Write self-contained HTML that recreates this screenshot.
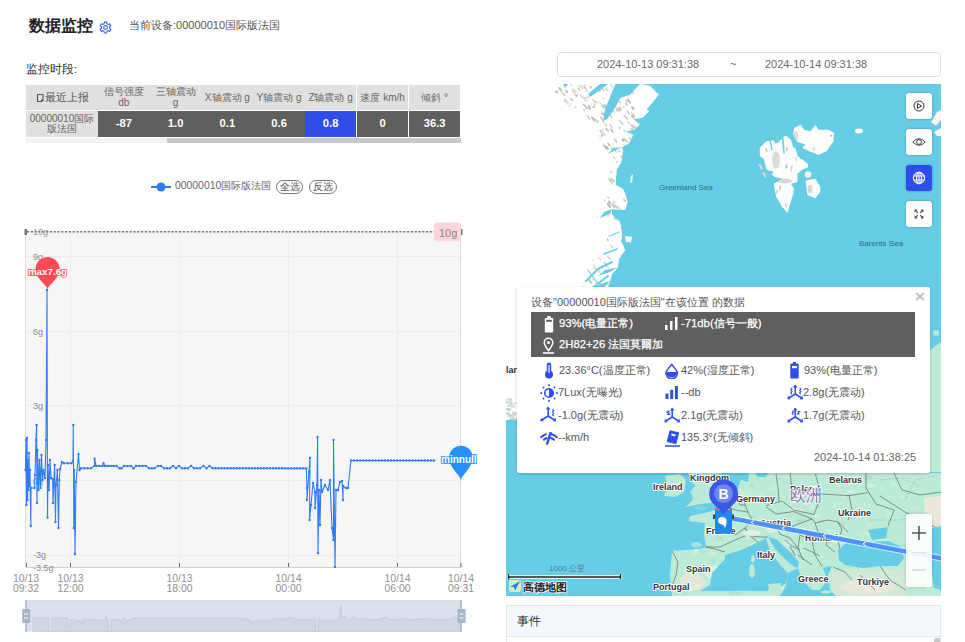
<!DOCTYPE html>
<html><head><meta charset="utf-8">
<style>
*{margin:0;padding:0;box-sizing:border-box}
html,body{width:965px;height:642px;overflow:hidden;background:#fff;font-family:"Liberation Sans",sans-serif;color:#333}
.abs{position:absolute}
.title{left:28.5px;top:15px;font-size:16px;font-weight:bold;color:#222;line-height:22px;white-space:nowrap}
.sub{left:129px;top:17px;font-size:11px;color:#555;line-height:16px;white-space:nowrap}
.period{left:26px;top:60.5px;font-size:11.5px;color:#333;line-height:16px}
table.t{position:absolute;left:26px;top:85px;border-collapse:collapse;table-layout:fixed;width:434.25px}
table.t td{text-align:center;font-size:10px;line-height:11px;color:#666;padding:0;overflow:hidden;white-space:nowrap}
table.t tr.h td{background:#e0e0e0;height:25px}
table.t tr.d td{background:#5f5f5f;height:26.5px;color:#fff;font-size:11.2px;font-weight:bold;border-top:1px solid #fff}
table.t tr.d td.c1{background:#e0e0e0;color:#666;font-size:10px;font-weight:normal;white-space:normal;line-height:10px}
table.t tr.d td.z{background:#2f4ee9;border-right:1px solid #fff}
table.t tr.d td.v{border-right:1px solid #fff}
.scroll{left:26px;top:137.5px;width:434.5px;height:5.5px;background:#f3f3f3}
.thumb{left:167px;top:137.5px;width:293.5px;height:5.5px;background:#c9c9c9}
.legend{left:175px;top:179px;font-size:10.4px;color:#666;line-height:14px;white-space:nowrap}
.pill{top:180px;height:14px;border:1px solid #777;border-radius:8px;font-size:9.5px;line-height:12px;color:#555;text-align:center}

.dinput{left:557px;top:52px;width:384px;height:25px;border:1px solid #dcdfe6;border-radius:4px;font-size:11px;color:#666;line-height:23px;white-space:nowrap}
.map{left:506px;top:84px;width:435px;height:512px;overflow:hidden}
.mbtn{left:906px;width:26px;height:26px;background:#fff;border-radius:3px;box-shadow:0 0 3px rgba(0,0,0,.28)}
.popup{left:517px;top:287px;width:413px;height:186px;background:#fff;border-radius:2px;box-shadow:0 1px 3px rgba(0,0,0,.2)}
.ptitle{left:14px;top:8px;font-size:11px;color:#555;line-height:14px;white-space:nowrap}
.dark{left:14px;top:25px;width:384px;height:45px;background:#5f5f5f}
.drow{font-size:11.3px;font-weight:normal;color:#fff;line-height:14px;white-space:nowrap;-webkit-text-stroke:0.25px #fff}
.prow{font-size:11px;color:#555;line-height:14px;white-space:nowrap}
.events{left:506px;top:605px;width:435px;height:40px;border:1px solid #e6e6e6;background:#fff}
.ehead{left:0;top:0;width:433px;height:31px;background:#f3f8fc;border-bottom:1px solid #e6e6e6;font-size:12px;color:#333;line-height:31px;padding-left:10px}
</style></head><body>
<div class="abs title">数据监控</div>
<svg class="abs" style="left:99px;top:21px" width="13" height="13" viewBox="0 0 24 24"><path fill="none" stroke="#3b5cf0" stroke-width="2.0" d="M10 2h4l.6 3 2.3 1.3 2.9-1 2 3.5-2.3 2v2.6l2.3 2-2 3.5-2.9-1-2.3 1.3-.6 3h-4l-.6-3-2.3-1.3-2.9 1-2-3.5 2.3-2V10.7l-2.3-2 2-3.5 2.9 1L9.4 5z"/><circle cx="12" cy="12" r="3.5" fill="none" stroke="#3b5cf0" stroke-width="2.0"/></svg>
<div class="abs sub">当前设备:00000010国际版法国</div>
<div class="abs period">监控时段:</div>
<table class="t">
<colgroup><col style="width:72px"><col style="width:51.75px"><col style="width:51.75px"><col style="width:51.75px"><col style="width:51.75px"><col style="width:51.75px"><col style="width:51.75px"><col style="width:51.75px"></colgroup>
<tr class="h"><td style="font-size:11px;color:#555"><svg width="9" height="9" style="vertical-align:-1px;margin-right:0px"><path d="M1.5 1.5 H7 V7.5 L5.5 8.5 H1.5Z M5.5 8.5 V7 H7" fill="none" stroke="#555" stroke-width="1.1"/></svg>最近上报</td><td>信号强度<br>db</td><td>三轴震动<br>g</td><td>X轴震动 g</td><td>Y轴震动 g</td><td style="border-right:1px solid #fff">Z轴震动 g</td><td style="border-right:1px solid #fff">速度 km/h</td><td>倾斜 °</td></tr>
<tr class="d"><td class="c1">00000010国际<br>版法国</td><td>-87</td><td>1.0</td><td>0.1</td><td>0.6</td><td class="z">0.8</td><td class="v">0</td><td>36.3</td></tr>
</table>
<div class="abs scroll"></div><div class="abs thumb"></div>

<svg class="abs" style="left:150px;top:182px" width="22" height="10"><line x1="1" y1="5" x2="21" y2="5" stroke="#2f7cf6" stroke-width="2"/><circle cx="11" cy="5" r="4.5" fill="#2f7cf6"/></svg>
<div class="abs legend">00000010国际版法国</div>
<div class="abs pill" style="left:276px;width:27px">全选</div>
<div class="abs pill" style="left:309px;width:28px">反选</div>

<!-- CHART -->
<svg class="abs" style="left:0;top:0" width="480" height="642" viewBox="0 0 480 642">
<rect x="26" y="231" width="435" height="336" fill="#f6f6f6"/>
<g stroke="#ececec" stroke-width="1">
<line x1="26" y1="256.5" x2="461" y2="256.5"/><line x1="26" y1="331.5" x2="461" y2="331.5"/><line x1="26" y1="405.5" x2="461" y2="405.5"/><line x1="26" y1="480.5" x2="461" y2="480.5"/><line x1="26" y1="555.5" x2="461" y2="555.5"/>
<line x1="70.5" y1="231" x2="70.5" y2="567"/><line x1="179.5" y1="231" x2="179.5" y2="567"/><line x1="288.5" y1="231" x2="288.5" y2="567"/><line x1="397.5" y1="231" x2="397.5" y2="567"/>
</g>
<line x1="25.5" y1="231" x2="25.5" y2="567" stroke="#dcdcdc"/>
<line x1="460.5" y1="231" x2="460.5" y2="567" stroke="#dcdcdc"/>
<line x1="26" y1="567.5" x2="461" y2="567.5" stroke="#d0d0d0"/>
<g stroke="#666" stroke-width="1">
<line x1="26.5" y1="563" x2="26.5" y2="567"/><line x1="70.5" y1="563" x2="70.5" y2="567"/><line x1="179.5" y1="563" x2="179.5" y2="567"/><line x1="288.5" y1="563" x2="288.5" y2="567"/><line x1="397.5" y1="563" x2="397.5" y2="567"/><line x1="461" y1="563" x2="461" y2="567"/>
</g>
<g font-family="Liberation Sans" font-size="9" fill="#8a8a8a">
<text x="33" y="260">9g</text><text x="33" y="334.5">6g</text><text x="33" y="409">3g</text><text x="33" y="483.5">0g</text><text x="33" y="558">-3g</text><text x="33" y="570.5">-3.5g</text>
<text x="33" y="235" fill="#999">10g</text>
</g>
<line x1="27" y1="231.8" x2="459" y2="231.8" stroke="#777" stroke-width="1.6" stroke-dasharray="2.2 1.6"/>
<rect x="24.5" y="229" width="2.5" height="6" fill="#777"/>
<rect x="459.5" y="229" width="3" height="6" fill="#777"/>
<rect x="434" y="222.4" width="27" height="19" rx="3" fill="#fdd4db"/>
<text x="439" y="236.5" font-family="Liberation Sans" font-size="11" fill="#888">10g</text>
<g font-family="Liberation Sans" font-size="10.4" fill="#8f8f8f" text-anchor="middle"><text x="26" y="582">10/13</text><text x="26" y="591.5">09:32</text><text x="70.5" y="582">10/13</text><text x="70.5" y="591.5">12:00</text><text x="179.5" y="582">10/13</text><text x="179.5" y="591.5">18:00</text><text x="288.5" y="582">10/14</text><text x="288.5" y="591.5">00:00</text><text x="397.5" y="582">10/14</text><text x="397.5" y="591.5">06:00</text><text x="461" y="582">10/14</text><text x="461" y="591.5">09:31</text></g>
<!-- DATA -->
<polyline id="data" fill="none" stroke="#2f7cf6" stroke-width="1.1" stroke-linejoin="round" points="25.5,470.0 26.0,440.0 26.5,505.0 27.0,438.0 27.5,500.0 28.0,460.0 28.5,490.0 29.0,453.0 29.5,486.0 30.0,470.0 30.8,526.0 31.0,488.0 34.5,488.0 35.0,475.0 36.0,440.0 36.6,425.0 37.0,503.0 37.5,450.0 38.0,470.0 38.5,490.0 39.5,460.0 40.5,488.0 41.5,455.0 42.5,480.0 43.5,470.0 45.0,478.0 46.0,440.0 47.0,290.0 47.5,517.5 48.0,465.0 49.0,490.0 50.0,460.0 51.0,478.0 52.7,479.0 53.0,503.0 54.6,465.0 55.5,522.0 56.0,485.0 57.4,470.0 58.5,528.0 59.3,480.0 60.0,469.0 62.0,462.0 64.0,463.3 71.4,463.3 73.0,461.0 73.3,425.0 73.8,528.0 74.2,470.0 75.0,554.0 76.0,482.0 78.5,454.0 79.5,470.0 81,468.2 91,468.2 94.6,465.9 94.6,458.6 96,465.9 102.5,465.9 103.5,463.3 105,465.9 116.5,465.9 119.5,468.2 121.5,468.2 124,465.9 131,465.9 133.5,468.6 136,465.9 146,465.9 149,468.2 154.5,468.2 158,465.9 161,465.9 164,468.2 170,468.2 173,465.9 176,468.2 179,465.9 182,468.2 188,468.2 191,465.9 194,468.2 200,468.2 203.5,465.9 206.5,468.2 209.5,465.9 212.5,468.2 306.3,468.4 307.0,488.0 307.0,500.0 309.0,472.0 310.0,458.0 309.5,520.0 311.0,505.0 313.0,483.0 315.0,492.0 315.0,508.0 317.0,485.0 317.6,437.0 318.0,553.0 319.0,490.0 320.0,525.0 321.0,480.0 322.0,492.0 325.0,485.0 328.0,490.0 330.0,480.0 332.0,528.0 333.5,540.0 333.5,440.0 335.0,567.0 336.0,490.0 338.0,490.0 340.0,482.0 342.0,481.0 343.0,500.0 343.0,486.0 346.0,488.0 348.0,488.0 351.0,460.5 434.0,460.5"/>
<path fill="#2f7cf6" d="M24.30 470.0a1.2 1.2 0 1 0 2.4 0a1.2 1.2 0 1 0 -2.4 0M24.80 440.0a1.2 1.2 0 1 0 2.4 0a1.2 1.2 0 1 0 -2.4 0M25.30 505.0a1.2 1.2 0 1 0 2.4 0a1.2 1.2 0 1 0 -2.4 0M25.80 438.0a1.2 1.2 0 1 0 2.4 0a1.2 1.2 0 1 0 -2.4 0M26.30 500.0a1.2 1.2 0 1 0 2.4 0a1.2 1.2 0 1 0 -2.4 0M26.80 460.0a1.2 1.2 0 1 0 2.4 0a1.2 1.2 0 1 0 -2.4 0M27.30 490.0a1.2 1.2 0 1 0 2.4 0a1.2 1.2 0 1 0 -2.4 0M27.80 453.0a1.2 1.2 0 1 0 2.4 0a1.2 1.2 0 1 0 -2.4 0M28.30 486.0a1.2 1.2 0 1 0 2.4 0a1.2 1.2 0 1 0 -2.4 0M28.80 470.0a1.2 1.2 0 1 0 2.4 0a1.2 1.2 0 1 0 -2.4 0M29.60 526.0a1.2 1.2 0 1 0 2.4 0a1.2 1.2 0 1 0 -2.4 0M29.80 488.0a1.2 1.2 0 1 0 2.4 0a1.2 1.2 0 1 0 -2.4 0M33.30 488.0a1.2 1.2 0 1 0 2.4 0a1.2 1.2 0 1 0 -2.4 0M33.80 475.0a1.2 1.2 0 1 0 2.4 0a1.2 1.2 0 1 0 -2.4 0M34.80 440.0a1.2 1.2 0 1 0 2.4 0a1.2 1.2 0 1 0 -2.4 0M35.40 425.0a1.2 1.2 0 1 0 2.4 0a1.2 1.2 0 1 0 -2.4 0M35.80 503.0a1.2 1.2 0 1 0 2.4 0a1.2 1.2 0 1 0 -2.4 0M36.30 450.0a1.2 1.2 0 1 0 2.4 0a1.2 1.2 0 1 0 -2.4 0M36.80 470.0a1.2 1.2 0 1 0 2.4 0a1.2 1.2 0 1 0 -2.4 0M37.30 490.0a1.2 1.2 0 1 0 2.4 0a1.2 1.2 0 1 0 -2.4 0M38.30 460.0a1.2 1.2 0 1 0 2.4 0a1.2 1.2 0 1 0 -2.4 0M39.30 488.0a1.2 1.2 0 1 0 2.4 0a1.2 1.2 0 1 0 -2.4 0M40.30 455.0a1.2 1.2 0 1 0 2.4 0a1.2 1.2 0 1 0 -2.4 0M41.30 480.0a1.2 1.2 0 1 0 2.4 0a1.2 1.2 0 1 0 -2.4 0M42.30 470.0a1.2 1.2 0 1 0 2.4 0a1.2 1.2 0 1 0 -2.4 0M43.80 478.0a1.2 1.2 0 1 0 2.4 0a1.2 1.2 0 1 0 -2.4 0M44.80 440.0a1.2 1.2 0 1 0 2.4 0a1.2 1.2 0 1 0 -2.4 0M45.80 290.0a1.2 1.2 0 1 0 2.4 0a1.2 1.2 0 1 0 -2.4 0M46.30 517.5a1.2 1.2 0 1 0 2.4 0a1.2 1.2 0 1 0 -2.4 0M46.80 465.0a1.2 1.2 0 1 0 2.4 0a1.2 1.2 0 1 0 -2.4 0M47.80 490.0a1.2 1.2 0 1 0 2.4 0a1.2 1.2 0 1 0 -2.4 0M48.80 460.0a1.2 1.2 0 1 0 2.4 0a1.2 1.2 0 1 0 -2.4 0M49.80 478.0a1.2 1.2 0 1 0 2.4 0a1.2 1.2 0 1 0 -2.4 0M51.50 479.0a1.2 1.2 0 1 0 2.4 0a1.2 1.2 0 1 0 -2.4 0M51.80 503.0a1.2 1.2 0 1 0 2.4 0a1.2 1.2 0 1 0 -2.4 0M53.40 465.0a1.2 1.2 0 1 0 2.4 0a1.2 1.2 0 1 0 -2.4 0M54.30 522.0a1.2 1.2 0 1 0 2.4 0a1.2 1.2 0 1 0 -2.4 0M54.80 485.0a1.2 1.2 0 1 0 2.4 0a1.2 1.2 0 1 0 -2.4 0M56.20 470.0a1.2 1.2 0 1 0 2.4 0a1.2 1.2 0 1 0 -2.4 0M57.30 528.0a1.2 1.2 0 1 0 2.4 0a1.2 1.2 0 1 0 -2.4 0M58.10 480.0a1.2 1.2 0 1 0 2.4 0a1.2 1.2 0 1 0 -2.4 0M58.80 469.0a1.2 1.2 0 1 0 2.4 0a1.2 1.2 0 1 0 -2.4 0M60.80 462.0a1.2 1.2 0 1 0 2.4 0a1.2 1.2 0 1 0 -2.4 0M62.80 463.3a1.2 1.2 0 1 0 2.4 0a1.2 1.2 0 1 0 -2.4 0M66.50 463.3a1.2 1.2 0 1 0 2.4 0a1.2 1.2 0 1 0 -2.4 0M70.20 463.3a1.2 1.2 0 1 0 2.4 0a1.2 1.2 0 1 0 -2.4 0M71.80 461.0a1.2 1.2 0 1 0 2.4 0a1.2 1.2 0 1 0 -2.4 0M72.10 425.0a1.2 1.2 0 1 0 2.4 0a1.2 1.2 0 1 0 -2.4 0M72.60 528.0a1.2 1.2 0 1 0 2.4 0a1.2 1.2 0 1 0 -2.4 0M73.00 470.0a1.2 1.2 0 1 0 2.4 0a1.2 1.2 0 1 0 -2.4 0M73.80 554.0a1.2 1.2 0 1 0 2.4 0a1.2 1.2 0 1 0 -2.4 0M74.80 482.0a1.2 1.2 0 1 0 2.4 0a1.2 1.2 0 1 0 -2.4 0M77.30 454.0a1.2 1.2 0 1 0 2.4 0a1.2 1.2 0 1 0 -2.4 0M78.30 470.0a1.2 1.2 0 1 0 2.4 0a1.2 1.2 0 1 0 -2.4 0M79.80 468.2a1.2 1.2 0 1 0 2.4 0a1.2 1.2 0 1 0 -2.4 0M83.13 468.2a1.2 1.2 0 1 0 2.4 0a1.2 1.2 0 1 0 -2.4 0M86.47 468.2a1.2 1.2 0 1 0 2.4 0a1.2 1.2 0 1 0 -2.4 0M89.80 468.2a1.2 1.2 0 1 0 2.4 0a1.2 1.2 0 1 0 -2.4 0M93.40 465.9a1.2 1.2 0 1 0 2.4 0a1.2 1.2 0 1 0 -2.4 0M93.40 458.6a1.2 1.2 0 1 0 2.4 0a1.2 1.2 0 1 0 -2.4 0M94.80 465.9a1.2 1.2 0 1 0 2.4 0a1.2 1.2 0 1 0 -2.4 0M98.05 465.9a1.2 1.2 0 1 0 2.4 0a1.2 1.2 0 1 0 -2.4 0M101.30 465.9a1.2 1.2 0 1 0 2.4 0a1.2 1.2 0 1 0 -2.4 0M102.30 463.3a1.2 1.2 0 1 0 2.4 0a1.2 1.2 0 1 0 -2.4 0M103.80 465.9a1.2 1.2 0 1 0 2.4 0a1.2 1.2 0 1 0 -2.4 0M106.67 465.9a1.2 1.2 0 1 0 2.4 0a1.2 1.2 0 1 0 -2.4 0M109.55 465.9a1.2 1.2 0 1 0 2.4 0a1.2 1.2 0 1 0 -2.4 0M112.42 465.9a1.2 1.2 0 1 0 2.4 0a1.2 1.2 0 1 0 -2.4 0M115.30 465.9a1.2 1.2 0 1 0 2.4 0a1.2 1.2 0 1 0 -2.4 0M118.30 468.2a1.2 1.2 0 1 0 2.4 0a1.2 1.2 0 1 0 -2.4 0M120.30 468.2a1.2 1.2 0 1 0 2.4 0a1.2 1.2 0 1 0 -2.4 0M122.80 465.9a1.2 1.2 0 1 0 2.4 0a1.2 1.2 0 1 0 -2.4 0M126.30 465.9a1.2 1.2 0 1 0 2.4 0a1.2 1.2 0 1 0 -2.4 0M129.80 465.9a1.2 1.2 0 1 0 2.4 0a1.2 1.2 0 1 0 -2.4 0M132.30 468.6a1.2 1.2 0 1 0 2.4 0a1.2 1.2 0 1 0 -2.4 0M134.80 465.9a1.2 1.2 0 1 0 2.4 0a1.2 1.2 0 1 0 -2.4 0M138.13 465.9a1.2 1.2 0 1 0 2.4 0a1.2 1.2 0 1 0 -2.4 0M141.47 465.9a1.2 1.2 0 1 0 2.4 0a1.2 1.2 0 1 0 -2.4 0M144.80 465.9a1.2 1.2 0 1 0 2.4 0a1.2 1.2 0 1 0 -2.4 0M147.80 468.2a1.2 1.2 0 1 0 2.4 0a1.2 1.2 0 1 0 -2.4 0M150.55 468.2a1.2 1.2 0 1 0 2.4 0a1.2 1.2 0 1 0 -2.4 0M153.30 468.2a1.2 1.2 0 1 0 2.4 0a1.2 1.2 0 1 0 -2.4 0M156.80 465.9a1.2 1.2 0 1 0 2.4 0a1.2 1.2 0 1 0 -2.4 0M159.80 465.9a1.2 1.2 0 1 0 2.4 0a1.2 1.2 0 1 0 -2.4 0M162.80 468.2a1.2 1.2 0 1 0 2.4 0a1.2 1.2 0 1 0 -2.4 0M165.80 468.2a1.2 1.2 0 1 0 2.4 0a1.2 1.2 0 1 0 -2.4 0M168.80 468.2a1.2 1.2 0 1 0 2.4 0a1.2 1.2 0 1 0 -2.4 0M171.80 465.9a1.2 1.2 0 1 0 2.4 0a1.2 1.2 0 1 0 -2.4 0M174.80 468.2a1.2 1.2 0 1 0 2.4 0a1.2 1.2 0 1 0 -2.4 0M177.80 465.9a1.2 1.2 0 1 0 2.4 0a1.2 1.2 0 1 0 -2.4 0M180.80 468.2a1.2 1.2 0 1 0 2.4 0a1.2 1.2 0 1 0 -2.4 0M183.80 468.2a1.2 1.2 0 1 0 2.4 0a1.2 1.2 0 1 0 -2.4 0M186.80 468.2a1.2 1.2 0 1 0 2.4 0a1.2 1.2 0 1 0 -2.4 0M189.80 465.9a1.2 1.2 0 1 0 2.4 0a1.2 1.2 0 1 0 -2.4 0M192.80 468.2a1.2 1.2 0 1 0 2.4 0a1.2 1.2 0 1 0 -2.4 0M195.80 468.2a1.2 1.2 0 1 0 2.4 0a1.2 1.2 0 1 0 -2.4 0M198.80 468.2a1.2 1.2 0 1 0 2.4 0a1.2 1.2 0 1 0 -2.4 0M202.30 465.9a1.2 1.2 0 1 0 2.4 0a1.2 1.2 0 1 0 -2.4 0M205.30 468.2a1.2 1.2 0 1 0 2.4 0a1.2 1.2 0 1 0 -2.4 0M208.30 465.9a1.2 1.2 0 1 0 2.4 0a1.2 1.2 0 1 0 -2.4 0M211.30 468.2a1.2 1.2 0 1 0 2.4 0a1.2 1.2 0 1 0 -2.4 0M214.33 468.2a1.2 1.2 0 1 0 2.4 0a1.2 1.2 0 1 0 -2.4 0M217.35 468.2a1.2 1.2 0 1 0 2.4 0a1.2 1.2 0 1 0 -2.4 0M220.38 468.2a1.2 1.2 0 1 0 2.4 0a1.2 1.2 0 1 0 -2.4 0M223.40 468.2a1.2 1.2 0 1 0 2.4 0a1.2 1.2 0 1 0 -2.4 0M226.43 468.2a1.2 1.2 0 1 0 2.4 0a1.2 1.2 0 1 0 -2.4 0M229.45 468.2a1.2 1.2 0 1 0 2.4 0a1.2 1.2 0 1 0 -2.4 0M232.48 468.2a1.2 1.2 0 1 0 2.4 0a1.2 1.2 0 1 0 -2.4 0M235.51 468.3a1.2 1.2 0 1 0 2.4 0a1.2 1.2 0 1 0 -2.4 0M238.53 468.3a1.2 1.2 0 1 0 2.4 0a1.2 1.2 0 1 0 -2.4 0M241.56 468.3a1.2 1.2 0 1 0 2.4 0a1.2 1.2 0 1 0 -2.4 0M244.58 468.3a1.2 1.2 0 1 0 2.4 0a1.2 1.2 0 1 0 -2.4 0M247.61 468.3a1.2 1.2 0 1 0 2.4 0a1.2 1.2 0 1 0 -2.4 0M250.64 468.3a1.2 1.2 0 1 0 2.4 0a1.2 1.2 0 1 0 -2.4 0M253.66 468.3a1.2 1.2 0 1 0 2.4 0a1.2 1.2 0 1 0 -2.4 0M256.69 468.3a1.2 1.2 0 1 0 2.4 0a1.2 1.2 0 1 0 -2.4 0M259.71 468.3a1.2 1.2 0 1 0 2.4 0a1.2 1.2 0 1 0 -2.4 0M262.74 468.3a1.2 1.2 0 1 0 2.4 0a1.2 1.2 0 1 0 -2.4 0M265.76 468.3a1.2 1.2 0 1 0 2.4 0a1.2 1.2 0 1 0 -2.4 0M268.79 468.3a1.2 1.2 0 1 0 2.4 0a1.2 1.2 0 1 0 -2.4 0M271.82 468.3a1.2 1.2 0 1 0 2.4 0a1.2 1.2 0 1 0 -2.4 0M274.84 468.3a1.2 1.2 0 1 0 2.4 0a1.2 1.2 0 1 0 -2.4 0M277.87 468.3a1.2 1.2 0 1 0 2.4 0a1.2 1.2 0 1 0 -2.4 0M280.89 468.3a1.2 1.2 0 1 0 2.4 0a1.2 1.2 0 1 0 -2.4 0M283.92 468.4a1.2 1.2 0 1 0 2.4 0a1.2 1.2 0 1 0 -2.4 0M286.95 468.4a1.2 1.2 0 1 0 2.4 0a1.2 1.2 0 1 0 -2.4 0M289.97 468.4a1.2 1.2 0 1 0 2.4 0a1.2 1.2 0 1 0 -2.4 0M293.00 468.4a1.2 1.2 0 1 0 2.4 0a1.2 1.2 0 1 0 -2.4 0M296.02 468.4a1.2 1.2 0 1 0 2.4 0a1.2 1.2 0 1 0 -2.4 0M299.05 468.4a1.2 1.2 0 1 0 2.4 0a1.2 1.2 0 1 0 -2.4 0M302.07 468.4a1.2 1.2 0 1 0 2.4 0a1.2 1.2 0 1 0 -2.4 0M305.10 468.4a1.2 1.2 0 1 0 2.4 0a1.2 1.2 0 1 0 -2.4 0M305.80 488.0a1.2 1.2 0 1 0 2.4 0a1.2 1.2 0 1 0 -2.4 0M305.80 500.0a1.2 1.2 0 1 0 2.4 0a1.2 1.2 0 1 0 -2.4 0M307.80 472.0a1.2 1.2 0 1 0 2.4 0a1.2 1.2 0 1 0 -2.4 0M308.80 458.0a1.2 1.2 0 1 0 2.4 0a1.2 1.2 0 1 0 -2.4 0M308.30 520.0a1.2 1.2 0 1 0 2.4 0a1.2 1.2 0 1 0 -2.4 0M309.80 505.0a1.2 1.2 0 1 0 2.4 0a1.2 1.2 0 1 0 -2.4 0M311.80 483.0a1.2 1.2 0 1 0 2.4 0a1.2 1.2 0 1 0 -2.4 0M313.80 492.0a1.2 1.2 0 1 0 2.4 0a1.2 1.2 0 1 0 -2.4 0M313.80 508.0a1.2 1.2 0 1 0 2.4 0a1.2 1.2 0 1 0 -2.4 0M315.80 485.0a1.2 1.2 0 1 0 2.4 0a1.2 1.2 0 1 0 -2.4 0M316.40 437.0a1.2 1.2 0 1 0 2.4 0a1.2 1.2 0 1 0 -2.4 0M316.80 553.0a1.2 1.2 0 1 0 2.4 0a1.2 1.2 0 1 0 -2.4 0M317.80 490.0a1.2 1.2 0 1 0 2.4 0a1.2 1.2 0 1 0 -2.4 0M318.80 525.0a1.2 1.2 0 1 0 2.4 0a1.2 1.2 0 1 0 -2.4 0M319.80 480.0a1.2 1.2 0 1 0 2.4 0a1.2 1.2 0 1 0 -2.4 0M320.80 492.0a1.2 1.2 0 1 0 2.4 0a1.2 1.2 0 1 0 -2.4 0M323.80 485.0a1.2 1.2 0 1 0 2.4 0a1.2 1.2 0 1 0 -2.4 0M326.80 490.0a1.2 1.2 0 1 0 2.4 0a1.2 1.2 0 1 0 -2.4 0M328.80 480.0a1.2 1.2 0 1 0 2.4 0a1.2 1.2 0 1 0 -2.4 0M330.80 528.0a1.2 1.2 0 1 0 2.4 0a1.2 1.2 0 1 0 -2.4 0M332.30 540.0a1.2 1.2 0 1 0 2.4 0a1.2 1.2 0 1 0 -2.4 0M332.30 440.0a1.2 1.2 0 1 0 2.4 0a1.2 1.2 0 1 0 -2.4 0M333.80 567.0a1.2 1.2 0 1 0 2.4 0a1.2 1.2 0 1 0 -2.4 0M334.80 490.0a1.2 1.2 0 1 0 2.4 0a1.2 1.2 0 1 0 -2.4 0M336.80 490.0a1.2 1.2 0 1 0 2.4 0a1.2 1.2 0 1 0 -2.4 0M338.80 482.0a1.2 1.2 0 1 0 2.4 0a1.2 1.2 0 1 0 -2.4 0M340.80 481.0a1.2 1.2 0 1 0 2.4 0a1.2 1.2 0 1 0 -2.4 0M341.80 500.0a1.2 1.2 0 1 0 2.4 0a1.2 1.2 0 1 0 -2.4 0M341.80 486.0a1.2 1.2 0 1 0 2.4 0a1.2 1.2 0 1 0 -2.4 0M344.80 488.0a1.2 1.2 0 1 0 2.4 0a1.2 1.2 0 1 0 -2.4 0M346.80 488.0a1.2 1.2 0 1 0 2.4 0a1.2 1.2 0 1 0 -2.4 0M349.80 460.5a1.2 1.2 0 1 0 2.4 0a1.2 1.2 0 1 0 -2.4 0M352.87 460.5a1.2 1.2 0 1 0 2.4 0a1.2 1.2 0 1 0 -2.4 0M355.95 460.5a1.2 1.2 0 1 0 2.4 0a1.2 1.2 0 1 0 -2.4 0M359.02 460.5a1.2 1.2 0 1 0 2.4 0a1.2 1.2 0 1 0 -2.4 0M362.10 460.5a1.2 1.2 0 1 0 2.4 0a1.2 1.2 0 1 0 -2.4 0M365.17 460.5a1.2 1.2 0 1 0 2.4 0a1.2 1.2 0 1 0 -2.4 0M368.24 460.5a1.2 1.2 0 1 0 2.4 0a1.2 1.2 0 1 0 -2.4 0M371.32 460.5a1.2 1.2 0 1 0 2.4 0a1.2 1.2 0 1 0 -2.4 0M374.39 460.5a1.2 1.2 0 1 0 2.4 0a1.2 1.2 0 1 0 -2.4 0M377.47 460.5a1.2 1.2 0 1 0 2.4 0a1.2 1.2 0 1 0 -2.4 0M380.54 460.5a1.2 1.2 0 1 0 2.4 0a1.2 1.2 0 1 0 -2.4 0M383.61 460.5a1.2 1.2 0 1 0 2.4 0a1.2 1.2 0 1 0 -2.4 0M386.69 460.5a1.2 1.2 0 1 0 2.4 0a1.2 1.2 0 1 0 -2.4 0M389.76 460.5a1.2 1.2 0 1 0 2.4 0a1.2 1.2 0 1 0 -2.4 0M392.84 460.5a1.2 1.2 0 1 0 2.4 0a1.2 1.2 0 1 0 -2.4 0M395.91 460.5a1.2 1.2 0 1 0 2.4 0a1.2 1.2 0 1 0 -2.4 0M398.99 460.5a1.2 1.2 0 1 0 2.4 0a1.2 1.2 0 1 0 -2.4 0M402.06 460.5a1.2 1.2 0 1 0 2.4 0a1.2 1.2 0 1 0 -2.4 0M405.13 460.5a1.2 1.2 0 1 0 2.4 0a1.2 1.2 0 1 0 -2.4 0M408.21 460.5a1.2 1.2 0 1 0 2.4 0a1.2 1.2 0 1 0 -2.4 0M411.28 460.5a1.2 1.2 0 1 0 2.4 0a1.2 1.2 0 1 0 -2.4 0M414.36 460.5a1.2 1.2 0 1 0 2.4 0a1.2 1.2 0 1 0 -2.4 0M417.43 460.5a1.2 1.2 0 1 0 2.4 0a1.2 1.2 0 1 0 -2.4 0M420.50 460.5a1.2 1.2 0 1 0 2.4 0a1.2 1.2 0 1 0 -2.4 0M423.58 460.5a1.2 1.2 0 1 0 2.4 0a1.2 1.2 0 1 0 -2.4 0M426.65 460.5a1.2 1.2 0 1 0 2.4 0a1.2 1.2 0 1 0 -2.4 0M429.73 460.5a1.2 1.2 0 1 0 2.4 0a1.2 1.2 0 1 0 -2.4 0M432.80 460.5a1.2 1.2 0 1 0 2.4 0a1.2 1.2 0 1 0 -2.4 0"/>

<!-- max pin -->
<path d="M47.5 289 C45.6 283.5 35.6 279 35.6 269 A11.95 11.95 0 1 1 59.5 269 C59.5 279 49.4 283.5 47.5 289Z" fill="#fe4a55"/>
<text x="47.5" y="275" text-anchor="middle" font-family="Liberation Sans" font-weight="bold" font-size="9.8" fill="#fff" stroke="#fe4a55" stroke-width="1.6" paint-order="stroke">max7.6g</text>
<!-- min pin -->
<path d="M460.9 479.6 C459 474 449.3 468 449.3 457.3 A11.6 11.6 0 1 1 472.5 457.3 C472.5 468 462.8 474 460.9 479.6Z" fill="#2490fb"/>
<text x="441" y="463" font-family="Liberation Sans" font-weight="bold" font-size="10" fill="#fff" stroke="#2490fb" stroke-width="1.6" paint-order="stroke">minnull</text>
<!-- slider -->
<rect x="26" y="600.5" width="435" height="31" fill="#dbe1ea"/>
<line x1="26" y1="600.8" x2="461" y2="600.8" stroke="#cfd5de" stroke-width="1"/>
<path d="M33 631.5 L33 618 L49 618 L49 631.5 L52 631.5 L52 618 L68 618 L68 631.5 L70 631.5 L70 620 L73 619 L76 621 L80 620 L82 624 L84 618 L86 620 L90 619 L96 620 L104 620 L106 616 L107 623 L108 619 L109 631.5 L111 631.5 L111 620 L115 620 L118 619 L121 621 L124 618 L127 620 L130 620 L133 618.3 L246 618.3 L248 619 L252 622 L256 621 L262 620 L268 621 L275 618.5 L280 619 L290 617.5 L296 619 L305 620 L312 619 L315 618.5 L316 631.5 L318 631.5 L318 619 L322 620 L328 621 L334 620 L339 619 L340.8 605.7 L342 618 L345 616 L350 621 L353 617 L358 619 L366 619 L372 620 L380 619 L386 617 L392 620 L398 619 L404 618 L410 620 L420 619 L430 619 L440 620 L450 619 L455 617 L461 620 L461 631.5Z" fill="#d0d6df" stroke="#bfc7d2" stroke-width=".7"/>
<line x1="26" y1="600" x2="26" y2="632" stroke="#a5b4c8" stroke-width="1.5"/>
<line x1="461" y1="600" x2="461" y2="632" stroke="#a5b4c8" stroke-width="1.5"/>
<rect x="22.2" y="609" width="8" height="14" rx="1" fill="#a5b4c8"/>
<rect x="457.5" y="609" width="8" height="14" rx="1" fill="#a5b4c8"/>
<g stroke="#fff" stroke-width="1"><path d="M24 614h4M24 618h4M459.5 614h4M459.5 618h4"/></g>
</svg>
<svg class="abs map" width="435" height="512" viewBox="506 84 435 512">
<rect x="506" y="84" width="435" height="512" fill="#67cde6"/>
<polygon points="506,84 640,84 650,86 658.6,94.8 651.9,102.9 646.5,109.6 649,111 642.4,117.7 633,119 639.7,124.4 634.3,129.8 625,131 633,135 629,143.3 622,147.3 623,150 621,163 616.6,169.6 615.5,185 623,189 625,193.6 627.5,202 625,210 612,209 612,215 620,222 622,235 621,241.5 625,250 619,259 617.7,267.6 612,274 610,280.7 607,290 600,305 590,330 570,370 545,398 520,418 506,420" fill="#ffffff"/>
<filter id="bl" x="-10%" y="-10%" width="120%" height="120%"><feGaussianBlur stdDeviation="0.7"/></filter>
<clipPath id="gb"><polygon points="546.7,84 587,124.4 600.6,140.6 604.7,150 614.5,150 610,171.8 603.6,204.5 595,215 608,226 608,237 599,254.6 584,267.6 582,280.7 575,300 560,340 607,290 610,280.7 612,274 617.7,267.6 619,259 625,250 621,241.5 622,235 620,222 612,215 612,209 625,210 627.5,202 625,193.6 623,189 615.5,185 616.6,169.6 621,163 623,150 622,147.3 629,143.3 633,135 625,131 634.3,129.8 639.7,124.4 633,119 642.4,117.7 649,111 646.5,109.6 651.9,102.9 658.6,94.8 650,86 640,84"/></clipPath>
<g clip-path="url(#gb)"><rect x="540" y="84" width="125" height="215" fill="#ffffff"/><g filter="url(#bl)">
<ellipse cx="642.9" cy="183.1" rx="1.5" ry="0.6" fill="#b8bab5" transform="rotate(58 642.9 183.1)"/>
<ellipse cx="590.6" cy="87.2" rx="1.4" ry="1.4" fill="#cfcfca" transform="rotate(36 590.6 87.2)"/>
<ellipse cx="637.2" cy="172.8" rx="3.1" ry="0.6" fill="#c0c0bb" transform="rotate(44 637.2 172.8)"/>
<ellipse cx="623.6" cy="246.0" rx="2.1" ry="0.8" fill="#ffffff" transform="rotate(44 623.6 246.0)"/>
<ellipse cx="613.5" cy="205.5" rx="2.9" ry="1.4" fill="#c4c4c0" transform="rotate(52 613.5 205.5)"/>
<ellipse cx="564.1" cy="263.0" rx="2.6" ry="0.7" fill="#cfcfca" transform="rotate(56 564.1 263.0)"/>
<ellipse cx="612.1" cy="143.3" rx="2.1" ry="1.1" fill="#cfcfca" transform="rotate(47 612.1 143.3)"/>
<ellipse cx="585.3" cy="97.9" rx="1.0" ry="0.9" fill="#b8bab5" transform="rotate(45 585.3 97.9)"/>
<ellipse cx="558.9" cy="209.8" rx="2.6" ry="0.8" fill="#ffffff" transform="rotate(57 558.9 209.8)"/>
<ellipse cx="659.7" cy="189.1" rx="1.0" ry="0.6" fill="#b0d9c1" transform="rotate(48 659.7 189.1)"/>
<ellipse cx="575.8" cy="227.5" rx="1.7" ry="1.4" fill="#e6dfca" transform="rotate(57 575.8 227.5)"/>
<ellipse cx="609.2" cy="86.4" rx="3.2" ry="0.8" fill="#ffffff" transform="rotate(44 609.2 86.4)"/>
<ellipse cx="613.9" cy="111.7" rx="2.0" ry="1.1" fill="#e6dfca" transform="rotate(44 613.9 111.7)"/>
<ellipse cx="552.1" cy="224.6" rx="2.4" ry="0.8" fill="#b0d9c1" transform="rotate(50 552.1 224.6)"/>
<ellipse cx="565.8" cy="122.5" rx="2.9" ry="0.7" fill="#e6dfca" transform="rotate(55 565.8 122.5)"/>
<ellipse cx="557.3" cy="253.1" rx="1.7" ry="0.7" fill="#b8bab5" transform="rotate(55 557.3 253.1)"/>
<ellipse cx="572.9" cy="123.0" rx="2.4" ry="0.6" fill="#ffffff" transform="rotate(50 572.9 123.0)"/>
<ellipse cx="631.8" cy="129.3" rx="1.6" ry="1.2" fill="#c0c0bb" transform="rotate(36 631.8 129.3)"/>
<ellipse cx="657.0" cy="149.5" rx="2.9" ry="0.8" fill="#b8bab5" transform="rotate(56 657.0 149.5)"/>
<ellipse cx="594.3" cy="191.8" rx="1.8" ry="0.9" fill="#c0c0bb" transform="rotate(45 594.3 191.8)"/>
<ellipse cx="545.5" cy="280.2" rx="2.2" ry="1.4" fill="#ffffff" transform="rotate(53 545.5 280.2)"/>
<ellipse cx="548.8" cy="179.0" rx="2.2" ry="1.3" fill="#b0d9c1" transform="rotate(57 548.8 179.0)"/>
<ellipse cx="573.6" cy="91.3" rx="3.0" ry="1.3" fill="#d8d8d2" transform="rotate(49 573.6 91.3)"/>
<ellipse cx="593.4" cy="279.3" rx="1.3" ry="1.4" fill="#e6dfca" transform="rotate(49 593.4 279.3)"/>
<ellipse cx="570.8" cy="109.4" rx="1.4" ry="1.2" fill="#cfcfca" transform="rotate(58 570.8 109.4)"/>
<ellipse cx="576.8" cy="139.9" rx="1.1" ry="0.8" fill="#ffffff" transform="rotate(55 576.8 139.9)"/>
<ellipse cx="563.4" cy="98.9" rx="2.4" ry="1.0" fill="#ffffff" transform="rotate(44 563.4 98.9)"/>
<ellipse cx="554.3" cy="121.1" rx="2.0" ry="1.1" fill="#e6dfca" transform="rotate(49 554.3 121.1)"/>
<ellipse cx="619.5" cy="93.0" rx="1.1" ry="1.1" fill="#ffffff" transform="rotate(54 619.5 93.0)"/>
<ellipse cx="547.1" cy="129.5" rx="2.5" ry="0.6" fill="#b0d9c1" transform="rotate(46 547.1 129.5)"/>
<ellipse cx="594.8" cy="267.0" rx="3.1" ry="1.0" fill="#e6dfca" transform="rotate(57 594.8 267.0)"/>
<ellipse cx="559.2" cy="227.6" rx="2.5" ry="1.2" fill="#ffffff" transform="rotate(49 559.2 227.6)"/>
<ellipse cx="555.7" cy="104.7" rx="1.4" ry="0.5" fill="#ffffff" transform="rotate(56 555.7 104.7)"/>
<ellipse cx="559.2" cy="259.5" rx="2.3" ry="1.2" fill="#b0d9c1" transform="rotate(36 559.2 259.5)"/>
<ellipse cx="634.8" cy="190.4" rx="2.2" ry="0.6" fill="#cfcfca" transform="rotate(49 634.8 190.4)"/>
<ellipse cx="554.0" cy="291.7" rx="2.4" ry="1.2" fill="#c0c0bb" transform="rotate(45 554.0 291.7)"/>
<ellipse cx="593.9" cy="101.3" rx="3.1" ry="0.9" fill="#d8d8d2" transform="rotate(54 593.9 101.3)"/>
<ellipse cx="563.8" cy="227.7" rx="1.3" ry="0.9" fill="#c0c0bb" transform="rotate(57 563.8 227.7)"/>
<ellipse cx="633.0" cy="114.5" rx="3.1" ry="1.3" fill="#e6dfca" transform="rotate(48 633.0 114.5)"/>
<ellipse cx="636.2" cy="223.6" rx="3.0" ry="0.8" fill="#b0d9c1" transform="rotate(42 636.2 223.6)"/>
<ellipse cx="639.1" cy="125.7" rx="1.5" ry="0.9" fill="#e6dfca" transform="rotate(57 639.1 125.7)"/>
<ellipse cx="594.0" cy="229.1" rx="2.0" ry="1.3" fill="#d8d8d2" transform="rotate(56 594.0 229.1)"/>
<ellipse cx="610.2" cy="184.1" rx="2.7" ry="1.3" fill="#ffffff" transform="rotate(36 610.2 184.1)"/>
<ellipse cx="651.6" cy="269.3" rx="3.1" ry="1.3" fill="#cfcfca" transform="rotate(41 651.6 269.3)"/>
<ellipse cx="567.2" cy="137.8" rx="2.4" ry="1.1" fill="#b8bab5" transform="rotate(36 567.2 137.8)"/>
<ellipse cx="550.3" cy="122.1" rx="2.6" ry="0.6" fill="#cfcfca" transform="rotate(37 550.3 122.1)"/>
<ellipse cx="642.6" cy="144.7" rx="2.0" ry="1.2" fill="#e6dfca" transform="rotate(43 642.6 144.7)"/>
<ellipse cx="554.1" cy="218.0" rx="1.9" ry="1.0" fill="#c0c0bb" transform="rotate(38 554.1 218.0)"/>
<ellipse cx="655.1" cy="161.8" rx="1.7" ry="1.1" fill="#c0c0bb" transform="rotate(51 655.1 161.8)"/>
<ellipse cx="639.3" cy="139.2" rx="2.5" ry="1.0" fill="#e6dfca" transform="rotate(38 639.3 139.2)"/>
<ellipse cx="602.8" cy="157.2" rx="2.4" ry="1.2" fill="#b8bab5" transform="rotate(39 602.8 157.2)"/>
<ellipse cx="557.7" cy="200.4" rx="2.2" ry="1.1" fill="#ffffff" transform="rotate(46 557.7 200.4)"/>
<ellipse cx="581.6" cy="120.7" rx="1.2" ry="0.7" fill="#cfcfca" transform="rotate(49 581.6 120.7)"/>
<ellipse cx="576.7" cy="95.1" rx="1.1" ry="1.0" fill="#b8bab5" transform="rotate(41 576.7 95.1)"/>
<ellipse cx="592.2" cy="196.6" rx="2.1" ry="1.4" fill="#e6dfca" transform="rotate(39 592.2 196.6)"/>
<ellipse cx="626.7" cy="202.0" rx="2.8" ry="1.2" fill="#ffffff" transform="rotate(50 626.7 202.0)"/>
<ellipse cx="639.0" cy="269.4" rx="1.7" ry="1.3" fill="#ffffff" transform="rotate(43 639.0 269.4)"/>
<ellipse cx="603.2" cy="194.0" rx="1.1" ry="0.7" fill="#c0c0bb" transform="rotate(51 603.2 194.0)"/>
<ellipse cx="636.5" cy="128.1" rx="1.2" ry="0.8" fill="#c0c0bb" transform="rotate(51 636.5 128.1)"/>
<ellipse cx="554.4" cy="290.8" rx="3.0" ry="1.3" fill="#d8d8d2" transform="rotate(46 554.4 290.8)"/>
<ellipse cx="550.0" cy="100.2" rx="2.6" ry="0.9" fill="#d8d8d2" transform="rotate(47 550.0 100.2)"/>
<ellipse cx="602.2" cy="88.9" rx="2.7" ry="0.9" fill="#c0c0bb" transform="rotate(40 602.2 88.9)"/>
<ellipse cx="571.2" cy="84.6" rx="1.6" ry="0.8" fill="#d8d8d2" transform="rotate(56 571.2 84.6)"/>
<ellipse cx="607.5" cy="117.1" rx="1.4" ry="0.9" fill="#c4c4c0" transform="rotate(39 607.5 117.1)"/>
<ellipse cx="548.2" cy="106.9" rx="2.0" ry="0.7" fill="#b8bab5" transform="rotate(56 548.2 106.9)"/>
<ellipse cx="628.5" cy="133.8" rx="1.9" ry="0.5" fill="#c4c4c0" transform="rotate(59 628.5 133.8)"/>
<ellipse cx="570.6" cy="103.6" rx="1.4" ry="0.8" fill="#c0c0bb" transform="rotate(38 570.6 103.6)"/>
<ellipse cx="651.8" cy="207.6" rx="1.6" ry="1.2" fill="#b0d9c1" transform="rotate(47 651.8 207.6)"/>
<ellipse cx="654.2" cy="146.5" rx="2.2" ry="0.5" fill="#d8d8d2" transform="rotate(43 654.2 146.5)"/>
<ellipse cx="661.2" cy="149.9" rx="2.5" ry="1.4" fill="#c4c4c0" transform="rotate(50 661.2 149.9)"/>
<ellipse cx="545.4" cy="90.3" rx="1.0" ry="1.0" fill="#cfcfca" transform="rotate(47 545.4 90.3)"/>
<ellipse cx="601.0" cy="157.1" rx="1.7" ry="1.0" fill="#ffffff" transform="rotate(59 601.0 157.1)"/>
<ellipse cx="555.3" cy="145.0" rx="1.3" ry="0.9" fill="#ffffff" transform="rotate(43 555.3 145.0)"/>
<ellipse cx="631.6" cy="236.7" rx="3.0" ry="0.8" fill="#e6dfca" transform="rotate(45 631.6 236.7)"/>
<ellipse cx="576.5" cy="119.3" rx="3.1" ry="0.5" fill="#ffffff" transform="rotate(39 576.5 119.3)"/>
<ellipse cx="616.6" cy="94.0" rx="3.0" ry="1.2" fill="#c0c0bb" transform="rotate(43 616.6 94.0)"/>
<ellipse cx="588.3" cy="99.0" rx="2.7" ry="1.3" fill="#ffffff" transform="rotate(43 588.3 99.0)"/>
<ellipse cx="581.4" cy="177.7" rx="1.5" ry="0.5" fill="#d8d8d2" transform="rotate(39 581.4 177.7)"/>
<ellipse cx="610.8" cy="171.3" rx="2.7" ry="1.0" fill="#e6dfca" transform="rotate(40 610.8 171.3)"/>
<ellipse cx="565.8" cy="100.5" rx="2.3" ry="1.3" fill="#cfcfca" transform="rotate(38 565.8 100.5)"/>
<ellipse cx="655.4" cy="137.0" rx="2.0" ry="0.7" fill="#cfcfca" transform="rotate(56 655.4 137.0)"/>
<ellipse cx="617.0" cy="217.5" rx="1.9" ry="1.1" fill="#e6dfca" transform="rotate(54 617.0 217.5)"/>
<ellipse cx="589.4" cy="108.3" rx="2.0" ry="1.2" fill="#c4c4c0" transform="rotate(37 589.4 108.3)"/>
<ellipse cx="595.4" cy="101.5" rx="1.7" ry="1.2" fill="#d8d8d2" transform="rotate(40 595.4 101.5)"/>
<ellipse cx="570.6" cy="266.1" rx="3.0" ry="1.0" fill="#c0c0bb" transform="rotate(45 570.6 266.1)"/>
<ellipse cx="655.9" cy="271.8" rx="3.0" ry="1.4" fill="#c0c0bb" transform="rotate(47 655.9 271.8)"/>
<ellipse cx="613.7" cy="91.3" rx="1.4" ry="0.6" fill="#c4c4c0" transform="rotate(53 613.7 91.3)"/>
<ellipse cx="579.4" cy="192.0" rx="1.4" ry="0.7" fill="#c4c4c0" transform="rotate(47 579.4 192.0)"/>
<ellipse cx="569.1" cy="185.4" rx="3.1" ry="1.4" fill="#b0d9c1" transform="rotate(57 569.1 185.4)"/>
<ellipse cx="588.6" cy="117.6" rx="3.1" ry="0.9" fill="#b0d9c1" transform="rotate(60 588.6 117.6)"/>
<ellipse cx="642.2" cy="239.5" rx="1.0" ry="1.1" fill="#c4c4c0" transform="rotate(39 642.2 239.5)"/>
<ellipse cx="602.4" cy="133.7" rx="2.0" ry="0.8" fill="#b0d9c1" transform="rotate(36 602.4 133.7)"/>
<ellipse cx="608.9" cy="103.5" rx="1.6" ry="1.1" fill="#b0d9c1" transform="rotate(47 608.9 103.5)"/>
<ellipse cx="634.1" cy="201.3" rx="2.1" ry="1.2" fill="#ffffff" transform="rotate(49 634.1 201.3)"/>
<ellipse cx="577.7" cy="119.1" rx="2.1" ry="0.6" fill="#c4c4c0" transform="rotate(55 577.7 119.1)"/>
<ellipse cx="598.8" cy="192.4" rx="1.8" ry="1.1" fill="#ffffff" transform="rotate(42 598.8 192.4)"/>
<ellipse cx="553.6" cy="113.0" rx="1.9" ry="0.8" fill="#cfcfca" transform="rotate(46 553.6 113.0)"/>
<ellipse cx="638.9" cy="178.1" rx="2.3" ry="0.6" fill="#b8bab5" transform="rotate(36 638.9 178.1)"/>
<ellipse cx="601.8" cy="131.9" rx="3.0" ry="1.1" fill="#c0c0bb" transform="rotate(36 601.8 131.9)"/>
<ellipse cx="577.7" cy="231.6" rx="2.0" ry="0.6" fill="#cfcfca" transform="rotate(36 577.7 231.6)"/>
<ellipse cx="602.0" cy="240.5" rx="1.4" ry="1.3" fill="#c0c0bb" transform="rotate(40 602.0 240.5)"/>
<ellipse cx="576.7" cy="281.6" rx="2.3" ry="1.0" fill="#e6dfca" transform="rotate(36 576.7 281.6)"/>
<ellipse cx="593.8" cy="170.0" rx="1.5" ry="0.7" fill="#c0c0bb" transform="rotate(37 593.8 170.0)"/>
<ellipse cx="606.6" cy="238.5" rx="3.1" ry="1.4" fill="#c4c4c0" transform="rotate(52 606.6 238.5)"/>
<ellipse cx="601.9" cy="119.0" rx="3.0" ry="0.7" fill="#b8bab5" transform="rotate(60 601.9 119.0)"/>
<ellipse cx="567.2" cy="255.1" rx="2.2" ry="0.6" fill="#c4c4c0" transform="rotate(40 567.2 255.1)"/>
<ellipse cx="548.1" cy="105.7" rx="1.3" ry="0.6" fill="#cfcfca" transform="rotate(44 548.1 105.7)"/>
<ellipse cx="567.5" cy="279.4" rx="1.5" ry="0.8" fill="#c0c0bb" transform="rotate(59 567.5 279.4)"/>
<ellipse cx="547.5" cy="155.8" rx="2.3" ry="0.9" fill="#c0c0bb" transform="rotate(48 547.5 155.8)"/>
<ellipse cx="596.7" cy="195.2" rx="2.7" ry="0.8" fill="#d8d8d2" transform="rotate(54 596.7 195.2)"/>
<ellipse cx="632.5" cy="146.6" rx="1.7" ry="1.3" fill="#b8bab5" transform="rotate(38 632.5 146.6)"/>
<ellipse cx="615.6" cy="95.8" rx="1.3" ry="0.5" fill="#b8bab5" transform="rotate(57 615.6 95.8)"/>
<ellipse cx="637.9" cy="290.2" rx="1.2" ry="1.0" fill="#b0d9c1" transform="rotate(46 637.9 290.2)"/>
<ellipse cx="586.9" cy="209.0" rx="2.9" ry="1.3" fill="#e6dfca" transform="rotate(42 586.9 209.0)"/>
<ellipse cx="659.3" cy="140.1" rx="2.3" ry="0.7" fill="#cfcfca" transform="rotate(60 659.3 140.1)"/>
<ellipse cx="630.3" cy="135.7" rx="3.1" ry="0.9" fill="#ffffff" transform="rotate(47 630.3 135.7)"/>
<ellipse cx="607.2" cy="266.0" rx="3.2" ry="0.5" fill="#c0c0bb" transform="rotate(45 607.2 266.0)"/>
<ellipse cx="602.8" cy="108.5" rx="2.6" ry="0.8" fill="#ffffff" transform="rotate(43 602.8 108.5)"/>
<ellipse cx="562.1" cy="129.7" rx="1.1" ry="0.5" fill="#e6dfca" transform="rotate(57 562.1 129.7)"/>
<ellipse cx="597.0" cy="159.7" rx="2.0" ry="1.1" fill="#d8d8d2" transform="rotate(38 597.0 159.7)"/>
<ellipse cx="649.2" cy="143.6" rx="1.3" ry="0.7" fill="#d8d8d2" transform="rotate(57 649.2 143.6)"/>
<ellipse cx="561.4" cy="126.4" rx="2.3" ry="1.4" fill="#ffffff" transform="rotate(42 561.4 126.4)"/>
<ellipse cx="578.6" cy="217.2" rx="1.1" ry="1.3" fill="#cfcfca" transform="rotate(54 578.6 217.2)"/>
<ellipse cx="622.2" cy="218.0" rx="2.9" ry="0.7" fill="#d8d8d2" transform="rotate(45 622.2 218.0)"/>
<ellipse cx="555.0" cy="132.3" rx="2.8" ry="1.3" fill="#c0c0bb" transform="rotate(45 555.0 132.3)"/>
<ellipse cx="585.2" cy="178.8" rx="1.4" ry="0.8" fill="#d8d8d2" transform="rotate(57 585.2 178.8)"/>
<ellipse cx="560.5" cy="194.6" rx="1.7" ry="1.3" fill="#e6dfca" transform="rotate(50 560.5 194.6)"/>
<ellipse cx="629.4" cy="262.4" rx="2.9" ry="0.7" fill="#c0c0bb" transform="rotate(56 629.4 262.4)"/>
<ellipse cx="566.8" cy="91.8" rx="1.5" ry="1.3" fill="#c0c0bb" transform="rotate(52 566.8 91.8)"/>
<ellipse cx="630.3" cy="133.2" rx="1.9" ry="0.7" fill="#e6dfca" transform="rotate(41 630.3 133.2)"/>
<ellipse cx="558.0" cy="129.8" rx="1.4" ry="0.7" fill="#c0c0bb" transform="rotate(47 558.0 129.8)"/>
<ellipse cx="601.8" cy="168.5" rx="1.3" ry="0.9" fill="#b8bab5" transform="rotate(57 601.8 168.5)"/>
<ellipse cx="562.1" cy="146.0" rx="2.9" ry="0.9" fill="#b8bab5" transform="rotate(47 562.1 146.0)"/>
<ellipse cx="580.4" cy="269.6" rx="3.2" ry="1.3" fill="#e6dfca" transform="rotate(54 580.4 269.6)"/>
<ellipse cx="579.1" cy="86.3" rx="1.9" ry="0.8" fill="#e6dfca" transform="rotate(40 579.1 86.3)"/>
<ellipse cx="579.6" cy="123.3" rx="2.6" ry="0.8" fill="#ffffff" transform="rotate(39 579.6 123.3)"/>
<ellipse cx="587.8" cy="234.6" rx="1.4" ry="1.1" fill="#d8d8d2" transform="rotate(38 587.8 234.6)"/>
<ellipse cx="609.6" cy="108.4" rx="2.9" ry="1.0" fill="#ffffff" transform="rotate(45 609.6 108.4)"/>
<ellipse cx="552.7" cy="141.5" rx="1.5" ry="0.7" fill="#e6dfca" transform="rotate(40 552.7 141.5)"/>
<ellipse cx="636.3" cy="281.0" rx="3.2" ry="1.2" fill="#d8d8d2" transform="rotate(53 636.3 281.0)"/>
<ellipse cx="623.1" cy="140.0" rx="1.8" ry="1.3" fill="#b8bab5" transform="rotate(54 623.1 140.0)"/>
<ellipse cx="639.1" cy="137.6" rx="2.3" ry="0.8" fill="#b0d9c1" transform="rotate(36 639.1 137.6)"/>
<ellipse cx="633.7" cy="189.0" rx="1.6" ry="1.1" fill="#e6dfca" transform="rotate(49 633.7 189.0)"/>
<ellipse cx="595.0" cy="144.0" rx="2.2" ry="1.1" fill="#cfcfca" transform="rotate(50 595.0 144.0)"/>
<ellipse cx="563.9" cy="112.5" rx="2.9" ry="0.6" fill="#cfcfca" transform="rotate(35 563.9 112.5)"/>
<ellipse cx="598.3" cy="290.8" rx="1.4" ry="1.2" fill="#b0d9c1" transform="rotate(37 598.3 290.8)"/>
<ellipse cx="584.4" cy="235.1" rx="1.2" ry="1.2" fill="#e6dfca" transform="rotate(45 584.4 235.1)"/>
<ellipse cx="639.2" cy="176.6" rx="2.4" ry="0.9" fill="#e6dfca" transform="rotate(41 639.2 176.6)"/>
<ellipse cx="545.7" cy="128.7" rx="1.9" ry="0.6" fill="#b8bab5" transform="rotate(43 545.7 128.7)"/>
<ellipse cx="578.9" cy="89.2" rx="2.3" ry="0.7" fill="#c4c4c0" transform="rotate(46 578.9 89.2)"/>
<ellipse cx="604.7" cy="217.1" rx="2.5" ry="1.2" fill="#ffffff" transform="rotate(48 604.7 217.1)"/>
<ellipse cx="594.9" cy="148.2" rx="1.4" ry="0.9" fill="#cfcfca" transform="rotate(48 594.9 148.2)"/>
<ellipse cx="578.2" cy="279.4" rx="2.0" ry="0.6" fill="#b8bab5" transform="rotate(60 578.2 279.4)"/>
<ellipse cx="564.7" cy="160.2" rx="1.2" ry="0.6" fill="#cfcfca" transform="rotate(55 564.7 160.2)"/>
<ellipse cx="585.3" cy="145.6" rx="2.1" ry="1.2" fill="#c0c0bb" transform="rotate(55 585.3 145.6)"/>
<ellipse cx="621.0" cy="107.6" rx="1.5" ry="0.6" fill="#d8d8d2" transform="rotate(45 621.0 107.6)"/>
<ellipse cx="623.0" cy="153.2" rx="2.0" ry="1.0" fill="#ffffff" transform="rotate(36 623.0 153.2)"/>
<ellipse cx="600.4" cy="137.4" rx="1.2" ry="0.7" fill="#e6dfca" transform="rotate(47 600.4 137.4)"/>
<ellipse cx="594.2" cy="240.7" rx="2.5" ry="1.4" fill="#c4c4c0" transform="rotate(36 594.2 240.7)"/>
<ellipse cx="640.5" cy="166.0" rx="1.6" ry="0.7" fill="#ffffff" transform="rotate(41 640.5 166.0)"/>
<ellipse cx="568.0" cy="210.0" rx="2.3" ry="0.9" fill="#cfcfca" transform="rotate(47 568.0 210.0)"/>
<ellipse cx="603.8" cy="200.2" rx="1.9" ry="1.1" fill="#c0c0bb" transform="rotate(53 603.8 200.2)"/>
<ellipse cx="652.1" cy="124.4" rx="3.2" ry="0.6" fill="#cfcfca" transform="rotate(54 652.1 124.4)"/>
<ellipse cx="562.0" cy="128.8" rx="2.1" ry="1.1" fill="#ffffff" transform="rotate(48 562.0 128.8)"/>
<ellipse cx="559.2" cy="125.3" rx="3.0" ry="0.7" fill="#d8d8d2" transform="rotate(41 559.2 125.3)"/>
<ellipse cx="654.7" cy="131.7" rx="1.7" ry="0.8" fill="#cfcfca" transform="rotate(40 654.7 131.7)"/>
<ellipse cx="604.4" cy="146.0" rx="3.1" ry="1.2" fill="#d8d8d2" transform="rotate(55 604.4 146.0)"/>
<ellipse cx="553.3" cy="136.1" rx="1.6" ry="0.8" fill="#d8d8d2" transform="rotate(40 553.3 136.1)"/>
<ellipse cx="568.4" cy="214.1" rx="1.9" ry="0.6" fill="#c0c0bb" transform="rotate(58 568.4 214.1)"/>
<ellipse cx="576.1" cy="143.9" rx="2.0" ry="0.7" fill="#d8d8d2" transform="rotate(44 576.1 143.9)"/>
<ellipse cx="555.4" cy="171.7" rx="2.7" ry="1.2" fill="#e6dfca" transform="rotate(41 555.4 171.7)"/>
<ellipse cx="565.3" cy="150.6" rx="1.7" ry="0.6" fill="#d8d8d2" transform="rotate(43 565.3 150.6)"/>
<ellipse cx="579.0" cy="185.2" rx="3.2" ry="0.7" fill="#c0c0bb" transform="rotate(35 579.0 185.2)"/>
<ellipse cx="636.6" cy="160.8" rx="1.8" ry="1.0" fill="#b0d9c1" transform="rotate(56 636.6 160.8)"/>
<ellipse cx="628.7" cy="122.7" rx="2.5" ry="0.7" fill="#cfcfca" transform="rotate(53 628.7 122.7)"/>
<ellipse cx="657.6" cy="149.3" rx="2.2" ry="1.3" fill="#e6dfca" transform="rotate(56 657.6 149.3)"/>
<ellipse cx="589.3" cy="106.2" rx="1.8" ry="0.9" fill="#c0c0bb" transform="rotate(35 589.3 106.2)"/>
<ellipse cx="598.8" cy="174.3" rx="1.2" ry="1.2" fill="#cfcfca" transform="rotate(52 598.8 174.3)"/>
<ellipse cx="568.6" cy="105.7" rx="2.5" ry="0.5" fill="#cfcfca" transform="rotate(40 568.6 105.7)"/>
<ellipse cx="628.7" cy="91.8" rx="1.7" ry="0.9" fill="#d8d8d2" transform="rotate(59 628.7 91.8)"/>
<ellipse cx="580.5" cy="150.9" rx="2.5" ry="1.1" fill="#d8d8d2" transform="rotate(35 580.5 150.9)"/>
<ellipse cx="633.3" cy="174.5" rx="2.0" ry="1.0" fill="#e6dfca" transform="rotate(52 633.3 174.5)"/>
<ellipse cx="561.0" cy="235.6" rx="1.2" ry="1.2" fill="#b0d9c1" transform="rotate(49 561.0 235.6)"/>
<ellipse cx="588.6" cy="122.3" rx="2.6" ry="1.0" fill="#ffffff" transform="rotate(45 588.6 122.3)"/>
<ellipse cx="556.7" cy="157.0" rx="2.0" ry="0.5" fill="#e6dfca" transform="rotate(51 556.7 157.0)"/>
<ellipse cx="649.1" cy="195.3" rx="2.9" ry="1.4" fill="#d8d8d2" transform="rotate(37 649.1 195.3)"/>
<ellipse cx="625.8" cy="253.1" rx="2.6" ry="0.7" fill="#ffffff" transform="rotate(42 625.8 253.1)"/>
<ellipse cx="545.1" cy="121.0" rx="2.4" ry="0.7" fill="#d8d8d2" transform="rotate(52 545.1 121.0)"/>
<ellipse cx="605.5" cy="105.0" rx="2.0" ry="0.9" fill="#e6dfca" transform="rotate(36 605.5 105.0)"/>
<ellipse cx="549.4" cy="116.8" rx="1.4" ry="0.8" fill="#cfcfca" transform="rotate(56 549.4 116.8)"/>
<ellipse cx="546.3" cy="197.4" rx="1.3" ry="0.8" fill="#e6dfca" transform="rotate(41 546.3 197.4)"/>
<ellipse cx="562.4" cy="173.2" rx="2.0" ry="0.9" fill="#c4c4c0" transform="rotate(36 562.4 173.2)"/>
<ellipse cx="545.9" cy="284.3" rx="2.6" ry="0.9" fill="#ffffff" transform="rotate(57 545.9 284.3)"/>
<ellipse cx="633.9" cy="226.9" rx="3.1" ry="1.3" fill="#c4c4c0" transform="rotate(40 633.9 226.9)"/>
<ellipse cx="547.4" cy="132.7" rx="3.1" ry="0.7" fill="#e6dfca" transform="rotate(59 547.4 132.7)"/>
<ellipse cx="563.6" cy="159.6" rx="2.4" ry="0.9" fill="#d8d8d2" transform="rotate(40 563.6 159.6)"/>
<ellipse cx="611.7" cy="182.6" rx="2.9" ry="0.6" fill="#c0c0bb" transform="rotate(56 611.7 182.6)"/>
<ellipse cx="642.5" cy="290.1" rx="1.2" ry="0.8" fill="#ffffff" transform="rotate(38 642.5 290.1)"/>
<ellipse cx="637.7" cy="137.9" rx="2.4" ry="1.2" fill="#ffffff" transform="rotate(39 637.7 137.9)"/>
<ellipse cx="585.3" cy="99.7" rx="2.9" ry="1.2" fill="#e6dfca" transform="rotate(42 585.3 99.7)"/>
<ellipse cx="567.7" cy="236.1" rx="2.4" ry="0.7" fill="#d8d8d2" transform="rotate(41 567.7 236.1)"/>
<ellipse cx="646.9" cy="138.8" rx="2.4" ry="1.2" fill="#d8d8d2" transform="rotate(60 646.9 138.8)"/>
<ellipse cx="558.0" cy="202.8" rx="2.9" ry="0.5" fill="#ffffff" transform="rotate(55 558.0 202.8)"/>
<ellipse cx="617.5" cy="110.1" rx="1.6" ry="1.3" fill="#b8bab5" transform="rotate(55 617.5 110.1)"/>
<ellipse cx="606.3" cy="117.6" rx="1.2" ry="1.2" fill="#c0c0bb" transform="rotate(35 606.3 117.6)"/>
<ellipse cx="594.3" cy="268.5" rx="1.9" ry="0.8" fill="#e6dfca" transform="rotate(51 594.3 268.5)"/>
<ellipse cx="630.5" cy="139.1" rx="2.9" ry="1.0" fill="#cfcfca" transform="rotate(44 630.5 139.1)"/>
<ellipse cx="568.0" cy="130.9" rx="1.4" ry="0.7" fill="#cfcfca" transform="rotate(54 568.0 130.9)"/>
<ellipse cx="597.0" cy="102.2" rx="1.2" ry="0.9" fill="#e6dfca" transform="rotate(51 597.0 102.2)"/>
<ellipse cx="561.6" cy="130.9" rx="1.6" ry="1.3" fill="#c0c0bb" transform="rotate(37 561.6 130.9)"/>
<ellipse cx="646.7" cy="213.4" rx="2.9" ry="1.1" fill="#e6dfca" transform="rotate(39 646.7 213.4)"/>
<ellipse cx="617.6" cy="177.3" rx="2.9" ry="1.3" fill="#d8d8d2" transform="rotate(56 617.6 177.3)"/>
<ellipse cx="609.9" cy="266.1" rx="3.1" ry="0.8" fill="#ffffff" transform="rotate(46 609.9 266.1)"/>
<ellipse cx="603.8" cy="133.2" rx="3.1" ry="1.0" fill="#ffffff" transform="rotate(54 603.8 133.2)"/>
<ellipse cx="649.4" cy="131.1" rx="1.2" ry="0.9" fill="#b0d9c1" transform="rotate(57 649.4 131.1)"/>
<ellipse cx="554.0" cy="182.5" rx="1.5" ry="1.2" fill="#b8bab5" transform="rotate(55 554.0 182.5)"/>
<ellipse cx="656.7" cy="181.8" rx="1.2" ry="1.3" fill="#b0d9c1" transform="rotate(55 656.7 181.8)"/>
<ellipse cx="587.0" cy="91.3" rx="1.6" ry="0.5" fill="#b8bab5" transform="rotate(42 587.0 91.3)"/>
<ellipse cx="628.1" cy="289.6" rx="2.6" ry="0.8" fill="#ffffff" transform="rotate(41 628.1 289.6)"/>
<ellipse cx="657.5" cy="211.8" rx="2.5" ry="0.7" fill="#e6dfca" transform="rotate(48 657.5 211.8)"/>
<ellipse cx="613.0" cy="180.4" rx="2.7" ry="1.2" fill="#b0d9c1" transform="rotate(39 613.0 180.4)"/>
<ellipse cx="627.3" cy="214.5" rx="1.5" ry="1.0" fill="#c4c4c0" transform="rotate(46 627.3 214.5)"/>
<ellipse cx="631.3" cy="170.2" rx="2.1" ry="0.8" fill="#c0c0bb" transform="rotate(45 631.3 170.2)"/>
<ellipse cx="616.4" cy="184.6" rx="2.6" ry="0.7" fill="#ffffff" transform="rotate(46 616.4 184.6)"/>
<ellipse cx="547.4" cy="266.3" rx="1.2" ry="1.0" fill="#b0d9c1" transform="rotate(40 547.4 266.3)"/>
<ellipse cx="616.7" cy="162.0" rx="1.3" ry="0.5" fill="#c4c4c0" transform="rotate(59 616.7 162.0)"/>
<ellipse cx="593.1" cy="105.8" rx="2.8" ry="1.1" fill="#b8bab5" transform="rotate(51 593.1 105.8)"/>
<ellipse cx="558.2" cy="202.6" rx="2.4" ry="0.8" fill="#e6dfca" transform="rotate(51 558.2 202.6)"/>
<ellipse cx="632.9" cy="126.5" rx="2.9" ry="1.3" fill="#c4c4c0" transform="rotate(35 632.9 126.5)"/>
<ellipse cx="547.2" cy="178.0" rx="2.5" ry="0.7" fill="#b8bab5" transform="rotate(46 547.2 178.0)"/>
<ellipse cx="603.5" cy="98.2" rx="1.5" ry="0.5" fill="#cfcfca" transform="rotate(52 603.5 98.2)"/>
<ellipse cx="571.5" cy="99.6" rx="2.0" ry="1.3" fill="#cfcfca" transform="rotate(41 571.5 99.6)"/>
<ellipse cx="583.9" cy="105.1" rx="2.0" ry="0.8" fill="#b8bab5" transform="rotate(39 583.9 105.1)"/>
<ellipse cx="565.0" cy="214.2" rx="2.5" ry="1.3" fill="#cfcfca" transform="rotate(40 565.0 214.2)"/>
<ellipse cx="619.3" cy="151.1" rx="1.2" ry="1.3" fill="#d8d8d2" transform="rotate(45 619.3 151.1)"/>
<ellipse cx="546.3" cy="248.1" rx="1.8" ry="1.4" fill="#c4c4c0" transform="rotate(44 546.3 248.1)"/>
<ellipse cx="584.5" cy="233.2" rx="2.3" ry="0.9" fill="#b0d9c1" transform="rotate(49 584.5 233.2)"/>
<ellipse cx="580.7" cy="125.1" rx="2.8" ry="0.9" fill="#e6dfca" transform="rotate(38 580.7 125.1)"/>
<ellipse cx="603.2" cy="121.9" rx="1.1" ry="0.6" fill="#b8bab5" transform="rotate(50 603.2 121.9)"/>
<ellipse cx="545.3" cy="132.9" rx="3.0" ry="0.7" fill="#e6dfca" transform="rotate(46 545.3 132.9)"/>
<ellipse cx="560.1" cy="114.9" rx="2.3" ry="1.0" fill="#e6dfca" transform="rotate(52 560.1 114.9)"/>
<ellipse cx="647.5" cy="172.3" rx="1.5" ry="1.4" fill="#ffffff" transform="rotate(38 647.5 172.3)"/>
<ellipse cx="611.6" cy="246.5" rx="2.1" ry="0.7" fill="#c4c4c0" transform="rotate(43 611.6 246.5)"/>
<ellipse cx="569.4" cy="167.1" rx="1.3" ry="0.9" fill="#c4c4c0" transform="rotate(55 569.4 167.1)"/>
<ellipse cx="604.2" cy="134.1" rx="2.4" ry="1.1" fill="#e6dfca" transform="rotate(36 604.2 134.1)"/>
<ellipse cx="554.2" cy="110.3" rx="2.3" ry="0.6" fill="#d8d8d2" transform="rotate(35 554.2 110.3)"/>
<ellipse cx="600.3" cy="103.2" rx="2.1" ry="0.5" fill="#b0d9c1" transform="rotate(50 600.3 103.2)"/>
<ellipse cx="615.4" cy="218.5" rx="2.6" ry="0.9" fill="#c4c4c0" transform="rotate(52 615.4 218.5)"/>
<ellipse cx="641.4" cy="136.3" rx="1.7" ry="1.0" fill="#c0c0bb" transform="rotate(36 641.4 136.3)"/>
<ellipse cx="609.3" cy="113.8" rx="1.6" ry="1.2" fill="#cfcfca" transform="rotate(46 609.3 113.8)"/>
<ellipse cx="554.9" cy="142.2" rx="1.8" ry="0.7" fill="#c4c4c0" transform="rotate(41 554.9 142.2)"/>
<ellipse cx="660.9" cy="155.3" rx="1.4" ry="0.8" fill="#c0c0bb" transform="rotate(51 660.9 155.3)"/>
<ellipse cx="615.5" cy="140.6" rx="2.6" ry="1.0" fill="#c0c0bb" transform="rotate(56 615.5 140.6)"/>
<ellipse cx="594.6" cy="104.7" rx="1.3" ry="0.8" fill="#d8d8d2" transform="rotate(37 594.6 104.7)"/>
<ellipse cx="661.7" cy="188.5" rx="1.8" ry="0.8" fill="#b0d9c1" transform="rotate(40 661.7 188.5)"/>
<ellipse cx="614.1" cy="148.0" rx="3.1" ry="0.6" fill="#ffffff" transform="rotate(52 614.1 148.0)"/>
<ellipse cx="585.4" cy="107.1" rx="3.0" ry="1.2" fill="#b8bab5" transform="rotate(51 585.4 107.1)"/>
<ellipse cx="659.4" cy="199.6" rx="1.7" ry="0.7" fill="#c0c0bb" transform="rotate(49 659.4 199.6)"/>
<ellipse cx="614.0" cy="157.5" rx="2.5" ry="1.0" fill="#e6dfca" transform="rotate(52 614.0 157.5)"/>
<ellipse cx="626.5" cy="104.4" rx="1.9" ry="0.9" fill="#c4c4c0" transform="rotate(53 626.5 104.4)"/>
<ellipse cx="599.5" cy="90.5" rx="1.3" ry="1.3" fill="#b0d9c1" transform="rotate(36 599.5 90.5)"/>
<ellipse cx="550.6" cy="143.1" rx="2.2" ry="1.0" fill="#c0c0bb" transform="rotate(53 550.6 143.1)"/>
<ellipse cx="644.2" cy="148.5" rx="1.7" ry="1.2" fill="#c0c0bb" transform="rotate(44 644.2 148.5)"/>
<ellipse cx="615.5" cy="150.7" rx="2.4" ry="0.9" fill="#d8d8d2" transform="rotate(52 615.5 150.7)"/>
<ellipse cx="644.8" cy="188.6" rx="1.3" ry="1.2" fill="#d8d8d2" transform="rotate(58 644.8 188.6)"/>
<ellipse cx="559.6" cy="219.7" rx="1.5" ry="0.9" fill="#b0d9c1" transform="rotate(57 559.6 219.7)"/>
<ellipse cx="553.7" cy="133.8" rx="3.0" ry="1.2" fill="#ffffff" transform="rotate(38 553.7 133.8)"/>
<ellipse cx="590.2" cy="281.6" rx="2.8" ry="1.1" fill="#c4c4c0" transform="rotate(54 590.2 281.6)"/>
<ellipse cx="581.6" cy="86.8" rx="2.4" ry="0.8" fill="#b0d9c1" transform="rotate(58 581.6 86.8)"/>
<ellipse cx="624.6" cy="200.4" rx="2.0" ry="1.0" fill="#cfcfca" transform="rotate(44 624.6 200.4)"/>
<ellipse cx="658.2" cy="148.4" rx="1.7" ry="1.1" fill="#e6dfca" transform="rotate(45 658.2 148.4)"/>
<ellipse cx="632.2" cy="146.8" rx="2.3" ry="1.3" fill="#b0d9c1" transform="rotate(48 632.2 146.8)"/>
<ellipse cx="558.1" cy="190.2" rx="1.8" ry="1.0" fill="#d8d8d2" transform="rotate(56 558.1 190.2)"/>
<ellipse cx="547.7" cy="101.9" rx="2.2" ry="0.6" fill="#ffffff" transform="rotate(50 547.7 101.9)"/>
<ellipse cx="662.0" cy="126.8" rx="2.9" ry="1.1" fill="#c0c0bb" transform="rotate(44 662.0 126.8)"/>
<ellipse cx="572.8" cy="236.4" rx="1.2" ry="1.4" fill="#ffffff" transform="rotate(45 572.8 236.4)"/>
<ellipse cx="568.1" cy="129.4" rx="1.4" ry="0.5" fill="#c0c0bb" transform="rotate(53 568.1 129.4)"/>
<ellipse cx="633.0" cy="92.9" rx="1.8" ry="0.6" fill="#c4c4c0" transform="rotate(48 633.0 92.9)"/>
<ellipse cx="599.4" cy="139.8" rx="2.2" ry="0.8" fill="#e6dfca" transform="rotate(56 599.4 139.8)"/>
<ellipse cx="596.2" cy="190.5" rx="3.1" ry="0.8" fill="#ffffff" transform="rotate(41 596.2 190.5)"/>
<ellipse cx="632.2" cy="166.1" rx="1.0" ry="0.9" fill="#b0d9c1" transform="rotate(49 632.2 166.1)"/>
<ellipse cx="556.8" cy="107.5" rx="2.1" ry="0.7" fill="#e6dfca" transform="rotate(50 556.8 107.5)"/>
<ellipse cx="648.2" cy="133.9" rx="1.8" ry="1.1" fill="#ffffff" transform="rotate(46 648.2 133.9)"/>
<ellipse cx="612.6" cy="149.5" rx="2.6" ry="1.3" fill="#b0d9c1" transform="rotate(58 612.6 149.5)"/>
<ellipse cx="575.9" cy="188.4" rx="2.8" ry="1.0" fill="#cfcfca" transform="rotate(45 575.9 188.4)"/>
<ellipse cx="638.6" cy="130.8" rx="2.8" ry="0.5" fill="#ffffff" transform="rotate(52 638.6 130.8)"/>
<ellipse cx="638.4" cy="230.2" rx="2.4" ry="1.3" fill="#c4c4c0" transform="rotate(49 638.4 230.2)"/>
<ellipse cx="557.7" cy="143.3" rx="1.5" ry="1.4" fill="#e6dfca" transform="rotate(57 557.7 143.3)"/>
<ellipse cx="596.3" cy="140.9" rx="1.3" ry="1.3" fill="#d8d8d2" transform="rotate(44 596.3 140.9)"/>
<ellipse cx="643.3" cy="141.1" rx="3.2" ry="1.1" fill="#e6dfca" transform="rotate(36 643.3 141.1)"/>
<ellipse cx="598.3" cy="282.1" rx="3.1" ry="0.5" fill="#e6dfca" transform="rotate(55 598.3 282.1)"/>
<ellipse cx="568.7" cy="102.1" rx="3.1" ry="0.6" fill="#b0d9c1" transform="rotate(47 568.7 102.1)"/>
<ellipse cx="660.1" cy="206.5" rx="2.2" ry="1.1" fill="#cfcfca" transform="rotate(59 660.1 206.5)"/>
<ellipse cx="578.2" cy="120.2" rx="2.3" ry="0.9" fill="#c4c4c0" transform="rotate(58 578.2 120.2)"/>
<ellipse cx="588.9" cy="244.8" rx="2.6" ry="0.6" fill="#d8d8d2" transform="rotate(41 588.9 244.8)"/>
<ellipse cx="649.4" cy="209.5" rx="2.9" ry="1.4" fill="#d8d8d2" transform="rotate(52 649.4 209.5)"/>
<ellipse cx="566.0" cy="147.2" rx="2.0" ry="1.3" fill="#b8bab5" transform="rotate(60 566.0 147.2)"/>
<ellipse cx="567.1" cy="234.1" rx="2.2" ry="0.8" fill="#e6dfca" transform="rotate(56 567.1 234.1)"/>
<ellipse cx="624.2" cy="88.9" rx="1.9" ry="1.2" fill="#c4c4c0" transform="rotate(37 624.2 88.9)"/>
<ellipse cx="564.6" cy="113.6" rx="1.6" ry="1.1" fill="#e6dfca" transform="rotate(38 564.6 113.6)"/>
<ellipse cx="614.2" cy="202.1" rx="1.6" ry="1.1" fill="#d8d8d2" transform="rotate(53 614.2 202.1)"/>
<ellipse cx="609.5" cy="202.3" rx="1.9" ry="1.1" fill="#b8bab5" transform="rotate(48 609.5 202.3)"/>
<ellipse cx="606.7" cy="147.7" rx="2.9" ry="1.4" fill="#b8bab5" transform="rotate(41 606.7 147.7)"/>
<ellipse cx="577.5" cy="147.5" rx="1.1" ry="0.7" fill="#d8d8d2" transform="rotate(52 577.5 147.5)"/>
<ellipse cx="582.1" cy="131.6" rx="1.9" ry="0.7" fill="#c0c0bb" transform="rotate(54 582.1 131.6)"/>
<ellipse cx="621.8" cy="157.1" rx="1.6" ry="1.3" fill="#cfcfca" transform="rotate(47 621.8 157.1)"/>
<ellipse cx="660.5" cy="129.1" rx="1.4" ry="0.7" fill="#e6dfca" transform="rotate(36 660.5 129.1)"/>
<ellipse cx="644.1" cy="270.4" rx="1.8" ry="1.2" fill="#e6dfca" transform="rotate(59 644.1 270.4)"/>
<ellipse cx="566.9" cy="110.0" rx="1.8" ry="1.0" fill="#c0c0bb" transform="rotate(52 566.9 110.0)"/>
<ellipse cx="600.1" cy="263.2" rx="2.2" ry="0.6" fill="#ffffff" transform="rotate(50 600.1 263.2)"/>
<ellipse cx="597.5" cy="243.7" rx="3.2" ry="0.6" fill="#c4c4c0" transform="rotate(54 597.5 243.7)"/>
<ellipse cx="661.2" cy="145.1" rx="1.6" ry="0.6" fill="#b8bab5" transform="rotate(58 661.2 145.1)"/>
<ellipse cx="633.5" cy="285.0" rx="2.8" ry="1.4" fill="#e6dfca" transform="rotate(37 633.5 285.0)"/>
<ellipse cx="564.5" cy="253.2" rx="2.7" ry="0.9" fill="#b0d9c1" transform="rotate(46 564.5 253.2)"/>
<ellipse cx="610.0" cy="179.9" rx="2.9" ry="1.4" fill="#cfcfca" transform="rotate(54 610.0 179.9)"/>
<ellipse cx="633.2" cy="108.6" rx="2.2" ry="0.7" fill="#cfcfca" transform="rotate(50 633.2 108.6)"/>
<ellipse cx="554.3" cy="165.3" rx="2.9" ry="1.2" fill="#b0d9c1" transform="rotate(48 554.3 165.3)"/>
<ellipse cx="603.3" cy="106.6" rx="2.7" ry="1.3" fill="#b0d9c1" transform="rotate(48 603.3 106.6)"/>
<ellipse cx="548.8" cy="257.0" rx="1.6" ry="0.8" fill="#b0d9c1" transform="rotate(51 548.8 257.0)"/>
<ellipse cx="624.6" cy="130.9" rx="2.1" ry="0.9" fill="#d8d8d2" transform="rotate(49 624.6 130.9)"/>
<ellipse cx="625.6" cy="179.8" rx="2.0" ry="1.2" fill="#cfcfca" transform="rotate(41 625.6 179.8)"/>
<ellipse cx="596.4" cy="120.8" rx="3.0" ry="1.3" fill="#d8d8d2" transform="rotate(44 596.4 120.8)"/>
<ellipse cx="611.1" cy="126.2" rx="3.1" ry="1.1" fill="#d8d8d2" transform="rotate(59 611.1 126.2)"/>
<ellipse cx="654.4" cy="187.1" rx="1.3" ry="0.6" fill="#c0c0bb" transform="rotate(55 654.4 187.1)"/>
<ellipse cx="547.8" cy="250.6" rx="1.1" ry="0.7" fill="#e6dfca" transform="rotate(57 547.8 250.6)"/>
<ellipse cx="617.2" cy="108.6" rx="2.9" ry="0.9" fill="#c0c0bb" transform="rotate(50 617.2 108.6)"/>
<ellipse cx="558.3" cy="248.8" rx="2.5" ry="1.2" fill="#ffffff" transform="rotate(52 558.3 248.8)"/>
<ellipse cx="620.2" cy="102.4" rx="1.4" ry="0.7" fill="#c4c4c0" transform="rotate(41 620.2 102.4)"/>
<ellipse cx="647.8" cy="228.7" rx="2.0" ry="1.0" fill="#ffffff" transform="rotate(48 647.8 228.7)"/>
<ellipse cx="617.3" cy="283.8" rx="1.2" ry="1.3" fill="#b0d9c1" transform="rotate(50 617.3 283.8)"/>
<ellipse cx="593.2" cy="118.9" rx="3.1" ry="1.2" fill="#c0c0bb" transform="rotate(49 593.2 118.9)"/>
<ellipse cx="547.8" cy="124.6" rx="1.3" ry="1.0" fill="#ffffff" transform="rotate(39 547.8 124.6)"/>
<ellipse cx="619.9" cy="108.9" rx="2.3" ry="1.3" fill="#b0d9c1" transform="rotate(56 619.9 108.9)"/>
<ellipse cx="558.0" cy="273.0" rx="2.3" ry="0.6" fill="#d8d8d2" transform="rotate(51 558.0 273.0)"/>
<ellipse cx="640.0" cy="280.3" rx="1.3" ry="0.7" fill="#cfcfca" transform="rotate(54 640.0 280.3)"/>
<ellipse cx="628.1" cy="112.4" rx="2.6" ry="0.8" fill="#c0c0bb" transform="rotate(59 628.1 112.4)"/>
<ellipse cx="596.7" cy="216.5" rx="1.4" ry="0.6" fill="#c4c4c0" transform="rotate(40 596.7 216.5)"/>
<ellipse cx="646.4" cy="260.0" rx="1.2" ry="0.9" fill="#b8bab5" transform="rotate(37 646.4 260.0)"/>
<ellipse cx="563.8" cy="176.6" rx="2.7" ry="1.3" fill="#b8bab5" transform="rotate(58 563.8 176.6)"/>
<ellipse cx="636.3" cy="141.9" rx="1.6" ry="0.8" fill="#b0d9c1" transform="rotate(46 636.3 141.9)"/>
<ellipse cx="567.8" cy="86.4" rx="1.8" ry="1.0" fill="#ffffff" transform="rotate(35 567.8 86.4)"/>
<ellipse cx="576.7" cy="128.7" rx="1.7" ry="0.9" fill="#c4c4c0" transform="rotate(55 576.7 128.7)"/>
<ellipse cx="649.0" cy="143.7" rx="2.1" ry="0.8" fill="#c4c4c0" transform="rotate(39 649.0 143.7)"/>
<ellipse cx="548.2" cy="269.5" rx="3.2" ry="1.4" fill="#b8bab5" transform="rotate(36 548.2 269.5)"/>
<ellipse cx="622.9" cy="152.8" rx="1.1" ry="0.5" fill="#cfcfca" transform="rotate(42 622.9 152.8)"/>
<ellipse cx="626.0" cy="140.4" rx="2.9" ry="0.9" fill="#c0c0bb" transform="rotate(38 626.0 140.4)"/>
<ellipse cx="568.6" cy="127.7" rx="1.0" ry="0.8" fill="#c0c0bb" transform="rotate(49 568.6 127.7)"/>
<ellipse cx="640.9" cy="147.0" rx="1.5" ry="0.5" fill="#c4c4c0" transform="rotate(37 640.9 147.0)"/>
<ellipse cx="586.0" cy="247.3" rx="1.7" ry="0.9" fill="#d8d8d2" transform="rotate(54 586.0 247.3)"/>
<ellipse cx="637.2" cy="207.7" rx="3.0" ry="0.7" fill="#c4c4c0" transform="rotate(59 637.2 207.7)"/>
<ellipse cx="578.3" cy="233.3" rx="1.7" ry="0.6" fill="#c0c0bb" transform="rotate(49 578.3 233.3)"/>
<ellipse cx="622.6" cy="123.6" rx="1.3" ry="1.2" fill="#e6dfca" transform="rotate(55 622.6 123.6)"/>
<ellipse cx="605.7" cy="125.1" rx="1.9" ry="1.3" fill="#e6dfca" transform="rotate(57 605.7 125.1)"/>
<ellipse cx="554.1" cy="182.4" rx="1.7" ry="0.5" fill="#cfcfca" transform="rotate(56 554.1 182.4)"/>
<ellipse cx="623.8" cy="107.0" rx="1.3" ry="1.3" fill="#e6dfca" transform="rotate(42 623.8 107.0)"/>
<ellipse cx="569.4" cy="171.5" rx="2.1" ry="1.2" fill="#e6dfca" transform="rotate(52 569.4 171.5)"/>
<ellipse cx="626.5" cy="100.9" rx="1.8" ry="1.1" fill="#d8d8d2" transform="rotate(36 626.5 100.9)"/>
<ellipse cx="635.7" cy="127.6" rx="3.2" ry="1.1" fill="#d8d8d2" transform="rotate(42 635.7 127.6)"/>
<ellipse cx="631.8" cy="204.7" rx="1.9" ry="0.6" fill="#e6dfca" transform="rotate(46 631.8 204.7)"/>
<ellipse cx="651.4" cy="219.2" rx="3.2" ry="0.9" fill="#b0d9c1" transform="rotate(58 651.4 219.2)"/>
<ellipse cx="622.0" cy="255.9" rx="2.0" ry="0.6" fill="#b8bab5" transform="rotate(54 622.0 255.9)"/>
<ellipse cx="604.4" cy="260.3" rx="2.9" ry="0.8" fill="#cfcfca" transform="rotate(55 604.4 260.3)"/>
<ellipse cx="618.2" cy="99.3" rx="1.4" ry="1.0" fill="#c4c4c0" transform="rotate(56 618.2 99.3)"/>
<ellipse cx="608.4" cy="197.5" rx="1.4" ry="1.0" fill="#b0d9c1" transform="rotate(37 608.4 197.5)"/>
<ellipse cx="638.7" cy="128.5" rx="1.9" ry="0.9" fill="#b0d9c1" transform="rotate(39 638.7 128.5)"/>
<ellipse cx="629.2" cy="281.2" rx="1.3" ry="0.6" fill="#c4c4c0" transform="rotate(56 629.2 281.2)"/>
<ellipse cx="545.0" cy="100.5" rx="1.1" ry="0.8" fill="#d8d8d2" transform="rotate(44 545.0 100.5)"/>
<ellipse cx="594.2" cy="104.2" rx="1.1" ry="0.7" fill="#cfcfca" transform="rotate(45 594.2 104.2)"/>
<ellipse cx="620.1" cy="111.7" rx="1.6" ry="0.6" fill="#ffffff" transform="rotate(41 620.1 111.7)"/>
<ellipse cx="565.8" cy="89.4" rx="1.0" ry="0.6" fill="#d8d8d2" transform="rotate(50 565.8 89.4)"/>
<ellipse cx="566.1" cy="184.0" rx="2.6" ry="1.0" fill="#ffffff" transform="rotate(58 566.1 184.0)"/>
<ellipse cx="591.8" cy="197.8" rx="2.0" ry="1.2" fill="#b8bab5" transform="rotate(54 591.8 197.8)"/>
<ellipse cx="579.4" cy="167.2" rx="2.2" ry="0.7" fill="#e6dfca" transform="rotate(46 579.4 167.2)"/>
<ellipse cx="642.6" cy="246.4" rx="2.5" ry="1.0" fill="#e6dfca" transform="rotate(38 642.6 246.4)"/>
<ellipse cx="648.4" cy="235.2" rx="1.8" ry="1.1" fill="#e6dfca" transform="rotate(45 648.4 235.2)"/>
<ellipse cx="592.8" cy="104.9" rx="1.4" ry="1.2" fill="#ffffff" transform="rotate(51 592.8 104.9)"/>
<ellipse cx="572.1" cy="112.2" rx="1.3" ry="0.6" fill="#d8d8d2" transform="rotate(37 572.1 112.2)"/>
<ellipse cx="562.2" cy="260.5" rx="3.0" ry="0.6" fill="#b0d9c1" transform="rotate(39 562.2 260.5)"/>
<ellipse cx="558.7" cy="131.9" rx="3.0" ry="1.2" fill="#b0d9c1" transform="rotate(41 558.7 131.9)"/>
<ellipse cx="567.0" cy="141.1" rx="1.3" ry="1.0" fill="#cfcfca" transform="rotate(47 567.0 141.1)"/>
<ellipse cx="642.4" cy="291.0" rx="2.9" ry="1.1" fill="#ffffff" transform="rotate(41 642.4 291.0)"/>
<ellipse cx="563.5" cy="93.9" rx="2.9" ry="0.8" fill="#b0d9c1" transform="rotate(44 563.5 93.9)"/>
<ellipse cx="637.2" cy="129.6" rx="2.9" ry="1.3" fill="#cfcfca" transform="rotate(43 637.2 129.6)"/>
<ellipse cx="556.6" cy="91.9" rx="1.7" ry="1.4" fill="#c4c4c0" transform="rotate(35 556.6 91.9)"/>
<ellipse cx="591.5" cy="232.1" rx="2.4" ry="1.3" fill="#d8d8d2" transform="rotate(59 591.5 232.1)"/>
<ellipse cx="607.1" cy="129.8" rx="2.6" ry="1.1" fill="#b0d9c1" transform="rotate(43 607.1 129.8)"/>
<ellipse cx="632.0" cy="129.0" rx="1.0" ry="1.3" fill="#e6dfca" transform="rotate(50 632.0 129.0)"/>
<ellipse cx="585.7" cy="135.6" rx="2.3" ry="1.3" fill="#d8d8d2" transform="rotate(44 585.7 135.6)"/>
<ellipse cx="600.3" cy="154.3" rx="1.2" ry="1.0" fill="#b8bab5" transform="rotate(47 600.3 154.3)"/>
<ellipse cx="580.7" cy="164.4" rx="2.5" ry="1.0" fill="#c0c0bb" transform="rotate(36 580.7 164.4)"/>
<ellipse cx="584.6" cy="133.9" rx="1.8" ry="1.0" fill="#c4c4c0" transform="rotate(37 584.6 133.9)"/>
<ellipse cx="547.2" cy="190.7" rx="2.6" ry="1.3" fill="#cfcfca" transform="rotate(36 547.2 190.7)"/>
<ellipse cx="586.5" cy="149.2" rx="1.5" ry="0.7" fill="#b0d9c1" transform="rotate(49 586.5 149.2)"/>
<ellipse cx="617.7" cy="109.1" rx="2.9" ry="1.1" fill="#e6dfca" transform="rotate(51 617.7 109.1)"/>
<ellipse cx="626.3" cy="117.8" rx="2.6" ry="0.7" fill="#c4c4c0" transform="rotate(49 626.3 117.8)"/>
<ellipse cx="640.9" cy="255.7" rx="2.9" ry="0.9" fill="#c0c0bb" transform="rotate(47 640.9 255.7)"/>
<ellipse cx="586.6" cy="133.5" rx="2.0" ry="0.6" fill="#cfcfca" transform="rotate(57 586.6 133.5)"/>
<ellipse cx="585.0" cy="84.7" rx="2.5" ry="0.6" fill="#d8d8d2" transform="rotate(45 585.0 84.7)"/>
<ellipse cx="622.1" cy="211.2" rx="3.1" ry="0.8" fill="#c4c4c0" transform="rotate(54 622.1 211.2)"/>
<ellipse cx="626.2" cy="122.9" rx="1.1" ry="1.1" fill="#ffffff" transform="rotate(58 626.2 122.9)"/>
<ellipse cx="621.2" cy="229.1" rx="2.8" ry="1.0" fill="#ffffff" transform="rotate(37 621.2 229.1)"/>
<ellipse cx="575.7" cy="130.3" rx="2.3" ry="1.3" fill="#e6dfca" transform="rotate(43 575.7 130.3)"/>
<ellipse cx="599.7" cy="258.8" rx="3.1" ry="0.8" fill="#e6dfca" transform="rotate(38 599.7 258.8)"/>
<ellipse cx="619.2" cy="284.8" rx="2.7" ry="1.0" fill="#b8bab5" transform="rotate(44 619.2 284.8)"/>
<ellipse cx="606.5" cy="89.3" rx="2.6" ry="0.9" fill="#d8d8d2" transform="rotate(41 606.5 89.3)"/>
<ellipse cx="620.9" cy="288.6" rx="1.4" ry="0.8" fill="#d8d8d2" transform="rotate(42 620.9 288.6)"/>
<ellipse cx="611.0" cy="271.4" rx="2.9" ry="1.0" fill="#ffffff" transform="rotate(53 611.0 271.4)"/>
<ellipse cx="655.9" cy="282.6" rx="2.6" ry="0.9" fill="#d8d8d2" transform="rotate(37 655.9 282.6)"/>
<ellipse cx="624.6" cy="145.2" rx="2.3" ry="0.7" fill="#d8d8d2" transform="rotate(37 624.6 145.2)"/>
<ellipse cx="547.0" cy="86.8" rx="2.6" ry="1.3" fill="#b8bab5" transform="rotate(58 547.0 86.8)"/>
<ellipse cx="607.6" cy="235.5" rx="1.6" ry="1.3" fill="#d8d8d2" transform="rotate(42 607.6 235.5)"/>
<ellipse cx="619.5" cy="127.9" rx="1.3" ry="1.1" fill="#cfcfca" transform="rotate(46 619.5 127.9)"/>
<ellipse cx="547.5" cy="115.2" rx="1.9" ry="0.8" fill="#b0d9c1" transform="rotate(54 547.5 115.2)"/>
<ellipse cx="633.7" cy="190.5" rx="2.1" ry="1.0" fill="#e6dfca" transform="rotate(47 633.7 190.5)"/>
<ellipse cx="629.1" cy="101.2" rx="2.9" ry="1.0" fill="#b8bab5" transform="rotate(55 629.1 101.2)"/>
<ellipse cx="564.6" cy="103.8" rx="2.6" ry="0.8" fill="#d8d8d2" transform="rotate(41 564.6 103.8)"/>
<ellipse cx="641.8" cy="125.0" rx="2.2" ry="0.5" fill="#c4c4c0" transform="rotate(50 641.8 125.0)"/>
<ellipse cx="656.4" cy="196.1" rx="2.7" ry="0.9" fill="#ffffff" transform="rotate(56 656.4 196.1)"/>
<ellipse cx="627.6" cy="192.0" rx="2.1" ry="1.1" fill="#c4c4c0" transform="rotate(38 627.6 192.0)"/>
<ellipse cx="546.2" cy="259.9" rx="1.9" ry="0.7" fill="#c4c4c0" transform="rotate(47 546.2 259.9)"/>
<ellipse cx="569.2" cy="101.6" rx="2.9" ry="1.3" fill="#ffffff" transform="rotate(46 569.2 101.6)"/>
<ellipse cx="582.0" cy="96.7" rx="3.0" ry="0.7" fill="#b0d9c1" transform="rotate(36 582.0 96.7)"/>
<ellipse cx="547.9" cy="121.3" rx="1.8" ry="1.2" fill="#c0c0bb" transform="rotate(42 547.9 121.3)"/>
<ellipse cx="592.9" cy="244.6" rx="1.8" ry="1.3" fill="#e6dfca" transform="rotate(55 592.9 244.6)"/>
<ellipse cx="591.7" cy="258.7" rx="2.5" ry="1.4" fill="#c0c0bb" transform="rotate(42 591.7 258.7)"/>
<ellipse cx="633.1" cy="205.6" rx="2.1" ry="1.2" fill="#ffffff" transform="rotate(39 633.1 205.6)"/>
<ellipse cx="571.8" cy="281.2" rx="1.8" ry="1.0" fill="#c0c0bb" transform="rotate(50 571.8 281.2)"/>
<ellipse cx="611.5" cy="143.1" rx="2.7" ry="1.1" fill="#ffffff" transform="rotate(52 611.5 143.1)"/>
<ellipse cx="582.9" cy="287.3" rx="1.0" ry="0.9" fill="#b8bab5" transform="rotate(56 582.9 287.3)"/>
<ellipse cx="575.4" cy="107.3" rx="1.3" ry="1.3" fill="#d8d8d2" transform="rotate(37 575.4 107.3)"/>
<ellipse cx="635.4" cy="287.8" rx="1.6" ry="0.7" fill="#d8d8d2" transform="rotate(53 635.4 287.8)"/>
<ellipse cx="561.8" cy="229.8" rx="2.6" ry="0.7" fill="#b0d9c1" transform="rotate(39 561.8 229.8)"/>
<ellipse cx="596.1" cy="157.2" rx="2.9" ry="1.3" fill="#ffffff" transform="rotate(44 596.1 157.2)"/>
<ellipse cx="656.0" cy="127.4" rx="2.7" ry="1.3" fill="#b0d9c1" transform="rotate(37 656.0 127.4)"/>
<ellipse cx="618.9" cy="84.8" rx="2.8" ry="0.9" fill="#b0d9c1" transform="rotate(44 618.9 84.8)"/>
<ellipse cx="645.1" cy="228.1" rx="2.2" ry="0.8" fill="#b0d9c1" transform="rotate(39 645.1 228.1)"/>
<ellipse cx="639.1" cy="133.5" rx="1.1" ry="1.4" fill="#cfcfca" transform="rotate(39 639.1 133.5)"/>
<ellipse cx="585.7" cy="183.3" rx="2.9" ry="1.4" fill="#cfcfca" transform="rotate(55 585.7 183.3)"/>
<ellipse cx="600.8" cy="157.8" rx="1.7" ry="1.2" fill="#ffffff" transform="rotate(44 600.8 157.8)"/>
<ellipse cx="551.5" cy="182.3" rx="2.9" ry="1.2" fill="#e6dfca" transform="rotate(42 551.5 182.3)"/>
<ellipse cx="604.1" cy="101.4" rx="2.9" ry="1.4" fill="#ffffff" transform="rotate(41 604.1 101.4)"/>
<ellipse cx="582.4" cy="132.0" rx="2.9" ry="0.7" fill="#e6dfca" transform="rotate(60 582.4 132.0)"/>
<ellipse cx="648.7" cy="139.0" rx="1.7" ry="1.0" fill="#b0d9c1" transform="rotate(43 648.7 139.0)"/>
<ellipse cx="556.1" cy="189.5" rx="2.7" ry="0.6" fill="#c0c0bb" transform="rotate(57 556.1 189.5)"/>
<ellipse cx="585.0" cy="87.8" rx="2.8" ry="0.8" fill="#c0c0bb" transform="rotate(51 585.0 87.8)"/>
<ellipse cx="569.4" cy="233.6" rx="3.1" ry="0.7" fill="#b8bab5" transform="rotate(57 569.4 233.6)"/>
<ellipse cx="634.9" cy="128.5" rx="2.9" ry="1.3" fill="#cfcfca" transform="rotate(51 634.9 128.5)"/>
<ellipse cx="611.9" cy="130.6" rx="2.6" ry="1.0" fill="#c0c0bb" transform="rotate(53 611.9 130.6)"/>
<ellipse cx="573.3" cy="128.0" rx="1.0" ry="1.3" fill="#d8d8d2" transform="rotate(36 573.3 128.0)"/>
<ellipse cx="633.2" cy="195.0" rx="2.7" ry="0.9" fill="#d8d8d2" transform="rotate(51 633.2 195.0)"/>
<ellipse cx="587.4" cy="137.8" rx="3.1" ry="1.3" fill="#b8bab5" transform="rotate(53 587.4 137.8)"/>
<ellipse cx="651.1" cy="273.6" rx="2.5" ry="0.8" fill="#e6dfca" transform="rotate(56 651.1 273.6)"/>
<ellipse cx="564.6" cy="102.5" rx="1.8" ry="0.8" fill="#c0c0bb" transform="rotate(42 564.6 102.5)"/>
<ellipse cx="615.6" cy="140.0" rx="1.1" ry="0.8" fill="#e6dfca" transform="rotate(56 615.6 140.0)"/>
<ellipse cx="602.2" cy="171.9" rx="3.1" ry="1.0" fill="#c4c4c0" transform="rotate(51 602.2 171.9)"/>
<ellipse cx="549.3" cy="196.7" rx="1.4" ry="0.6" fill="#cfcfca" transform="rotate(42 549.3 196.7)"/>
<ellipse cx="609.1" cy="258.1" rx="3.0" ry="0.9" fill="#d8d8d2" transform="rotate(36 609.1 258.1)"/>
<ellipse cx="593.8" cy="226.4" rx="2.4" ry="1.4" fill="#c4c4c0" transform="rotate(58 593.8 226.4)"/>
<ellipse cx="555.8" cy="93.8" rx="2.0" ry="0.9" fill="#e6dfca" transform="rotate(47 555.8 93.8)"/>
<ellipse cx="635.6" cy="137.7" rx="2.0" ry="1.2" fill="#cfcfca" transform="rotate(39 635.6 137.7)"/>
<ellipse cx="622.5" cy="86.4" rx="1.7" ry="0.9" fill="#c4c4c0" transform="rotate(52 622.5 86.4)"/>
<ellipse cx="636.8" cy="146.9" rx="3.0" ry="0.8" fill="#ffffff" transform="rotate(53 636.8 146.9)"/>
<ellipse cx="545.2" cy="181.3" rx="2.4" ry="1.3" fill="#e6dfca" transform="rotate(38 545.2 181.3)"/>
<ellipse cx="550.1" cy="125.9" rx="3.0" ry="1.2" fill="#b8bab5" transform="rotate(44 550.1 125.9)"/>
<ellipse cx="652.2" cy="171.5" rx="1.8" ry="1.0" fill="#ffffff" transform="rotate(54 652.2 171.5)"/>
<ellipse cx="632.6" cy="107.9" rx="2.0" ry="1.2" fill="#b8bab5" transform="rotate(48 632.6 107.9)"/>
<ellipse cx="561.8" cy="149.6" rx="1.8" ry="1.0" fill="#b8bab5" transform="rotate(43 561.8 149.6)"/>
<ellipse cx="623.1" cy="149.2" rx="2.9" ry="0.5" fill="#e6dfca" transform="rotate(40 623.1 149.2)"/>
<ellipse cx="634.8" cy="253.4" rx="3.1" ry="1.0" fill="#cfcfca" transform="rotate(38 634.8 253.4)"/>
<ellipse cx="627.3" cy="223.6" rx="2.3" ry="0.8" fill="#cfcfca" transform="rotate(57 627.3 223.6)"/>
<ellipse cx="643.8" cy="128.7" rx="1.5" ry="0.8" fill="#c0c0bb" transform="rotate(54 643.8 128.7)"/>
<ellipse cx="619.8" cy="109.6" rx="1.9" ry="1.3" fill="#c4c4c0" transform="rotate(44 619.8 109.6)"/>
<ellipse cx="589.2" cy="260.4" rx="1.5" ry="1.2" fill="#cfcfca" transform="rotate(53 589.2 260.4)"/>
<ellipse cx="658.2" cy="242.9" rx="2.0" ry="0.7" fill="#b0d9c1" transform="rotate(55 658.2 242.9)"/>
<ellipse cx="610.9" cy="125.3" rx="1.3" ry="1.1" fill="#e6dfca" transform="rotate(53 610.9 125.3)"/>
<ellipse cx="551.2" cy="143.0" rx="2.8" ry="0.6" fill="#cfcfca" transform="rotate(47 551.2 143.0)"/>
<ellipse cx="608.3" cy="215.1" rx="2.0" ry="1.3" fill="#e6dfca" transform="rotate(46 608.3 215.1)"/>
<ellipse cx="589.1" cy="278.7" rx="1.7" ry="0.8" fill="#c0c0bb" transform="rotate(41 589.1 278.7)"/>
<ellipse cx="563.4" cy="166.3" rx="2.0" ry="0.6" fill="#e6dfca" transform="rotate(38 563.4 166.3)"/>
<ellipse cx="564.2" cy="109.0" rx="2.1" ry="0.7" fill="#ffffff" transform="rotate(43 564.2 109.0)"/>
<ellipse cx="605.4" cy="106.5" rx="2.5" ry="1.4" fill="#b0d9c1" transform="rotate(50 605.4 106.5)"/>
<ellipse cx="575.1" cy="90.7" rx="3.1" ry="0.7" fill="#e6dfca" transform="rotate(43 575.1 90.7)"/>
<ellipse cx="608.9" cy="144.4" rx="2.6" ry="0.9" fill="#c0c0bb" transform="rotate(52 608.9 144.4)"/>
<ellipse cx="644.2" cy="231.0" rx="2.4" ry="1.2" fill="#e6dfca" transform="rotate(42 644.2 231.0)"/>
<ellipse cx="618.5" cy="272.7" rx="1.1" ry="1.0" fill="#e6dfca" transform="rotate(49 618.5 272.7)"/>
<ellipse cx="604.7" cy="263.1" rx="2.0" ry="0.7" fill="#c0c0bb" transform="rotate(51 604.7 263.1)"/>
<ellipse cx="648.0" cy="165.2" rx="1.6" ry="1.2" fill="#cfcfca" transform="rotate(39 648.0 165.2)"/>
<ellipse cx="591.5" cy="150.4" rx="2.3" ry="0.6" fill="#ffffff" transform="rotate(39 591.5 150.4)"/>
<ellipse cx="562.4" cy="92.8" rx="3.0" ry="0.9" fill="#d8d8d2" transform="rotate(36 562.4 92.8)"/>
<ellipse cx="571.3" cy="204.2" rx="2.0" ry="0.7" fill="#b8bab5" transform="rotate(38 571.3 204.2)"/>
<ellipse cx="545.9" cy="230.5" rx="1.3" ry="1.2" fill="#e6dfca" transform="rotate(53 545.9 230.5)"/>
<ellipse cx="548.3" cy="111.9" rx="1.9" ry="1.2" fill="#c4c4c0" transform="rotate(55 548.3 111.9)"/>
<ellipse cx="614.9" cy="251.8" rx="1.3" ry="1.0" fill="#ffffff" transform="rotate(52 614.9 251.8)"/>
<ellipse cx="610.9" cy="116.5" rx="2.1" ry="0.9" fill="#b0d9c1" transform="rotate(52 610.9 116.5)"/>
<ellipse cx="570.0" cy="195.7" rx="2.1" ry="1.3" fill="#cfcfca" transform="rotate(60 570.0 195.7)"/>
<ellipse cx="568.2" cy="129.5" rx="3.0" ry="1.2" fill="#ffffff" transform="rotate(52 568.2 129.5)"/>
<ellipse cx="650.2" cy="263.9" rx="2.6" ry="0.8" fill="#e6dfca" transform="rotate(45 650.2 263.9)"/>
<ellipse cx="567.2" cy="102.5" rx="1.6" ry="0.9" fill="#d8d8d2" transform="rotate(44 567.2 102.5)"/>
<ellipse cx="659.3" cy="140.4" rx="1.4" ry="1.3" fill="#e6dfca" transform="rotate(47 659.3 140.4)"/>
<ellipse cx="550.3" cy="95.8" rx="1.6" ry="0.5" fill="#c0c0bb" transform="rotate(40 550.3 95.8)"/>
<ellipse cx="635.3" cy="278.0" rx="2.4" ry="0.7" fill="#cfcfca" transform="rotate(40 635.3 278.0)"/>
<ellipse cx="600.2" cy="271.0" rx="1.3" ry="1.0" fill="#ffffff" transform="rotate(47 600.2 271.0)"/>
<ellipse cx="571.6" cy="134.1" rx="2.5" ry="0.6" fill="#c4c4c0" transform="rotate(56 571.6 134.1)"/>
<ellipse cx="632.9" cy="116.5" rx="2.1" ry="1.4" fill="#b8bab5" transform="rotate(53 632.9 116.5)"/>
<ellipse cx="658.0" cy="137.5" rx="2.9" ry="0.8" fill="#b0d9c1" transform="rotate(41 658.0 137.5)"/>
<ellipse cx="587.2" cy="144.9" rx="2.2" ry="0.9" fill="#b8bab5" transform="rotate(58 587.2 144.9)"/>
<ellipse cx="643.2" cy="219.5" rx="1.9" ry="1.3" fill="#b8bab5" transform="rotate(41 643.2 219.5)"/>
<ellipse cx="611.2" cy="85.5" rx="3.1" ry="0.9" fill="#d8d8d2" transform="rotate(53 611.2 85.5)"/>
<ellipse cx="608.9" cy="205.2" rx="3.2" ry="1.3" fill="#c0c0bb" transform="rotate(54 608.9 205.2)"/>
<ellipse cx="557.7" cy="133.8" rx="2.9" ry="0.5" fill="#ffffff" transform="rotate(59 557.7 133.8)"/>
<ellipse cx="577.4" cy="289.5" rx="2.3" ry="0.7" fill="#cfcfca" transform="rotate(42 577.4 289.5)"/>
<ellipse cx="661.4" cy="285.3" rx="2.6" ry="0.7" fill="#b8bab5" transform="rotate(56 661.4 285.3)"/>
<ellipse cx="566.6" cy="287.0" rx="2.9" ry="1.4" fill="#d8d8d2" transform="rotate(42 566.6 287.0)"/>
<ellipse cx="593.5" cy="146.9" rx="2.5" ry="1.2" fill="#c0c0bb" transform="rotate(45 593.5 146.9)"/>
<ellipse cx="596.0" cy="121.0" rx="2.0" ry="0.5" fill="#d8d8d2" transform="rotate(49 596.0 121.0)"/>
<ellipse cx="617.1" cy="207.1" rx="3.2" ry="1.1" fill="#b0d9c1" transform="rotate(42 617.1 207.1)"/>
<ellipse cx="549.6" cy="120.9" rx="1.6" ry="0.7" fill="#ffffff" transform="rotate(37 549.6 120.9)"/>
<ellipse cx="610.1" cy="162.1" rx="2.6" ry="0.7" fill="#b8bab5" transform="rotate(48 610.1 162.1)"/>
<ellipse cx="554.7" cy="150.4" rx="2.9" ry="1.1" fill="#b8bab5" transform="rotate(46 554.7 150.4)"/>
<ellipse cx="573.5" cy="291.6" rx="1.1" ry="1.2" fill="#e6dfca" transform="rotate(50 573.5 291.6)"/>
<ellipse cx="579.6" cy="141.9" rx="3.0" ry="1.2" fill="#c4c4c0" transform="rotate(36 579.6 141.9)"/>
<ellipse cx="584.3" cy="188.1" rx="1.4" ry="0.7" fill="#b0d9c1" transform="rotate(42 584.3 188.1)"/>
<ellipse cx="560.1" cy="89.1" rx="2.6" ry="1.3" fill="#c4c4c0" transform="rotate(44 560.1 89.1)"/>
<ellipse cx="582.5" cy="174.1" rx="2.7" ry="1.3" fill="#b8bab5" transform="rotate(46 582.5 174.1)"/>
<ellipse cx="611.7" cy="97.4" rx="3.0" ry="0.7" fill="#c4c4c0" transform="rotate(51 611.7 97.4)"/>
<ellipse cx="619.6" cy="177.1" rx="1.3" ry="1.0" fill="#cfcfca" transform="rotate(55 619.6 177.1)"/>
<ellipse cx="650.1" cy="146.2" rx="1.2" ry="1.3" fill="#e6dfca" transform="rotate(55 650.1 146.2)"/>
<ellipse cx="646.7" cy="280.0" rx="2.0" ry="1.2" fill="#c0c0bb" transform="rotate(59 646.7 280.0)"/>
<ellipse cx="613.8" cy="147.5" rx="2.6" ry="0.7" fill="#e6dfca" transform="rotate(47 613.8 147.5)"/>
<ellipse cx="586.5" cy="221.6" rx="2.1" ry="0.6" fill="#cfcfca" transform="rotate(53 586.5 221.6)"/>
<ellipse cx="548.4" cy="145.1" rx="1.1" ry="0.9" fill="#b8bab5" transform="rotate(47 548.4 145.1)"/>
<ellipse cx="577.9" cy="186.6" rx="1.9" ry="1.0" fill="#cfcfca" transform="rotate(46 577.9 186.6)"/>
<ellipse cx="605.3" cy="226.8" rx="1.8" ry="0.8" fill="#d8d8d2" transform="rotate(36 605.3 226.8)"/>
<ellipse cx="632.5" cy="89.8" rx="2.0" ry="1.0" fill="#ffffff" transform="rotate(49 632.5 89.8)"/>
<ellipse cx="602.1" cy="135.6" rx="1.3" ry="1.3" fill="#c0c0bb" transform="rotate(45 602.1 135.6)"/>
<ellipse cx="567.6" cy="142.4" rx="2.7" ry="1.2" fill="#c0c0bb" transform="rotate(44 567.6 142.4)"/>
<ellipse cx="603.9" cy="260.4" rx="2.9" ry="0.9" fill="#ffffff" transform="rotate(50 603.9 260.4)"/>
<ellipse cx="562.4" cy="225.8" rx="1.3" ry="1.0" fill="#b0d9c1" transform="rotate(45 562.4 225.8)"/>
<ellipse cx="566.6" cy="99.3" rx="1.8" ry="0.6" fill="#ffffff" transform="rotate(40 566.6 99.3)"/>
<ellipse cx="600.9" cy="284.9" rx="3.0" ry="1.1" fill="#c0c0bb" transform="rotate(52 600.9 284.9)"/>
<ellipse cx="563.4" cy="214.5" rx="2.6" ry="0.9" fill="#b0d9c1" transform="rotate(50 563.4 214.5)"/>
<ellipse cx="627.9" cy="97.1" rx="2.5" ry="0.6" fill="#d8d8d2" transform="rotate(54 627.9 97.1)"/>
<ellipse cx="567.9" cy="120.1" rx="2.1" ry="0.6" fill="#e6dfca" transform="rotate(47 567.9 120.1)"/>
<ellipse cx="576.2" cy="95.6" rx="2.2" ry="1.1" fill="#c4c4c0" transform="rotate(51 576.2 95.6)"/>
<ellipse cx="602.9" cy="129.7" rx="1.3" ry="0.6" fill="#b0d9c1" transform="rotate(38 602.9 129.7)"/>
<ellipse cx="602.0" cy="113.9" rx="1.1" ry="0.5" fill="#b0d9c1" transform="rotate(42 602.0 113.9)"/>
<ellipse cx="640.1" cy="190.9" rx="2.0" ry="1.1" fill="#c4c4c0" transform="rotate(60 640.1 190.9)"/>
<ellipse cx="603.7" cy="229.8" rx="1.1" ry="1.3" fill="#ffffff" transform="rotate(36 603.7 229.8)"/>
<ellipse cx="620.8" cy="122.1" rx="2.9" ry="0.6" fill="#b8bab5" transform="rotate(50 620.8 122.1)"/>
<ellipse cx="553.7" cy="97.0" rx="1.1" ry="1.3" fill="#ffffff" transform="rotate(51 553.7 97.0)"/>
<ellipse cx="552.4" cy="119.1" rx="1.5" ry="1.1" fill="#e6dfca" transform="rotate(38 552.4 119.1)"/>
<ellipse cx="608.8" cy="285.3" rx="3.1" ry="0.8" fill="#cfcfca" transform="rotate(51 608.8 285.3)"/>
<ellipse cx="572.4" cy="124.1" rx="2.7" ry="0.9" fill="#cfcfca" transform="rotate(59 572.4 124.1)"/>
<ellipse cx="626.3" cy="223.2" rx="1.5" ry="0.6" fill="#b0d9c1" transform="rotate(49 626.3 223.2)"/>
<ellipse cx="570.9" cy="285.5" rx="1.6" ry="0.7" fill="#c0c0bb" transform="rotate(40 570.9 285.5)"/>
<ellipse cx="578.0" cy="103.5" rx="2.7" ry="0.8" fill="#ffffff" transform="rotate(38 578.0 103.5)"/>
<ellipse cx="599.3" cy="271.6" rx="2.2" ry="1.3" fill="#e6dfca" transform="rotate(39 599.3 271.6)"/>
<ellipse cx="557.3" cy="112.2" rx="1.4" ry="1.3" fill="#c0c0bb" transform="rotate(55 557.3 112.2)"/>
<ellipse cx="603.6" cy="114.2" rx="2.5" ry="1.4" fill="#c0c0bb" transform="rotate(36 603.6 114.2)"/>
<ellipse cx="586.8" cy="284.3" rx="1.9" ry="1.2" fill="#ffffff" transform="rotate(41 586.8 284.3)"/>
<ellipse cx="584.3" cy="109.9" rx="1.5" ry="0.6" fill="#b0d9c1" transform="rotate(36 584.3 109.9)"/>
<ellipse cx="624.4" cy="115.7" rx="1.2" ry="0.7" fill="#b8bab5" transform="rotate(35 624.4 115.7)"/>
<ellipse cx="585.4" cy="186.7" rx="2.3" ry="0.8" fill="#d8d8d2" transform="rotate(47 585.4 186.7)"/>
<ellipse cx="576.1" cy="260.1" rx="1.1" ry="1.0" fill="#ffffff" transform="rotate(54 576.1 260.1)"/>
<ellipse cx="599.6" cy="171.6" rx="2.3" ry="1.2" fill="#cfcfca" transform="rotate(56 599.6 171.6)"/>
<ellipse cx="574.3" cy="160.9" rx="1.5" ry="0.6" fill="#b0d9c1" transform="rotate(55 574.3 160.9)"/>
<ellipse cx="583.6" cy="107.2" rx="3.1" ry="1.3" fill="#ffffff" transform="rotate(47 583.6 107.2)"/>
<ellipse cx="587.9" cy="97.2" rx="1.9" ry="1.2" fill="#e6dfca" transform="rotate(51 587.9 97.2)"/>
<ellipse cx="661.6" cy="133.7" rx="3.1" ry="0.8" fill="#c0c0bb" transform="rotate(51 661.6 133.7)"/>
<ellipse cx="598.8" cy="172.4" rx="1.2" ry="0.6" fill="#cfcfca" transform="rotate(58 598.8 172.4)"/>
<ellipse cx="563.4" cy="148.2" rx="2.7" ry="0.8" fill="#cfcfca" transform="rotate(50 563.4 148.2)"/>
<ellipse cx="661.5" cy="155.4" rx="1.4" ry="1.2" fill="#c4c4c0" transform="rotate(39 661.5 155.4)"/>
<ellipse cx="641.8" cy="233.9" rx="1.9" ry="1.2" fill="#ffffff" transform="rotate(52 641.8 233.9)"/>
<ellipse cx="654.7" cy="252.0" rx="2.7" ry="0.7" fill="#c0c0bb" transform="rotate(47 654.7 252.0)"/>
<ellipse cx="612.9" cy="98.7" rx="3.2" ry="1.3" fill="#ffffff" transform="rotate(54 612.9 98.7)"/>
<ellipse cx="586.0" cy="151.6" rx="1.6" ry="0.7" fill="#cfcfca" transform="rotate(44 586.0 151.6)"/>
<ellipse cx="575.6" cy="234.0" rx="1.6" ry="0.9" fill="#b8bab5" transform="rotate(42 575.6 234.0)"/>
<ellipse cx="611.1" cy="254.8" rx="1.2" ry="0.6" fill="#ffffff" transform="rotate(57 611.1 254.8)"/>
<ellipse cx="565.8" cy="224.6" rx="1.1" ry="0.9" fill="#e6dfca" transform="rotate(38 565.8 224.6)"/>
<ellipse cx="571.5" cy="171.3" rx="1.4" ry="0.9" fill="#d8d8d2" transform="rotate(45 571.5 171.3)"/>
<ellipse cx="548.3" cy="86.8" rx="3.0" ry="0.6" fill="#b0d9c1" transform="rotate(38 548.3 86.8)"/>
</g></g>
<g fill="#67cde6">
<polygon points="615.5,84 640,84 630,95 621,97.5 613,111 607,119 603,121 605,110 610,97"/>
<polygon points="600,84 608,84 596,93 590,97 588,94"/>
<polygon points="563,84 568,84 565,88"/>
<polygon points="622,147.3 612,152 607,154 614,148"/>
<polygon points="612,209 604,212 600,218 610,214"/>
<polygon points="617,267.6 605,270 598,276 610,272"/>
<polygon points="610,280.7 596,286 590,292 604,288"/>
<polygon points="603,293 585,298 580,305 598,300"/>
<g stroke="#67cde6" fill="none" stroke-linecap="round" stroke-linejoin="round"><path d="M612 262 L598 269 L586 281" stroke-width="2"/><path d="M617 249 L604 254" stroke-width="1.4"/><path d="M608 276 L592 288" stroke-width="2"/><path d="M619 232 L610 236" stroke-width="1.3"/><path d="M598 284 L588 270" stroke-width="1.2"/></g>
</g>
<polygon points="625,236 632,237 631,242.6 626,242" fill="#fff"/>
<polygon points="631,176 633,174 632,182 630,183" fill="#fff"/>
<g filter="url(#bl)">
<ellipse cx="512.8" cy="416.1" rx="2" ry="1.2" fill="#d4d4cf"/>
<ellipse cx="513.0" cy="406.4" rx="2" ry="1.2" fill="#d4d4cf"/>
<ellipse cx="514.9" cy="414.3" rx="2" ry="1.2" fill="#d4d4cf"/>
<ellipse cx="511.6" cy="417.9" rx="2" ry="1.2" fill="#e0e0da"/>
<ellipse cx="514.0" cy="412.8" rx="2" ry="1.2" fill="#d4d4cf"/>
<ellipse cx="506.6" cy="402.3" rx="2" ry="1.2" fill="#b9dcc6"/>
<ellipse cx="509.9" cy="416.6" rx="2" ry="1.2" fill="#e0e0da"/>
<ellipse cx="514.3" cy="414.1" rx="2" ry="1.2" fill="#b9dcc6"/>
<ellipse cx="510.7" cy="403.1" rx="2" ry="1.2" fill="#b9dcc6"/>
<ellipse cx="512.2" cy="404.9" rx="2" ry="1.2" fill="#e0e0da"/>
<ellipse cx="508.1" cy="409.6" rx="2" ry="1.2" fill="#e0e0da"/>
<ellipse cx="510.6" cy="415.1" rx="2" ry="1.2" fill="#d4d4cf"/>
<ellipse cx="509.1" cy="405.6" rx="2" ry="1.2" fill="#d4d4cf"/>
<ellipse cx="509.1" cy="409.7" rx="2" ry="1.2" fill="#b9dcc6"/>
<ellipse cx="507.9" cy="408.9" rx="2" ry="1.2" fill="#d4d4cf"/>
<ellipse cx="508.5" cy="409.1" rx="2" ry="1.2" fill="#b9dcc6"/>
<ellipse cx="514.7" cy="419.3" rx="2" ry="1.2" fill="#b9dcc6"/>
<ellipse cx="507.8" cy="413.4" rx="2" ry="1.2" fill="#b9dcc6"/>
<ellipse cx="510.7" cy="402.0" rx="2" ry="1.2" fill="#e0e0da"/>
<ellipse cx="515.5" cy="403.4" rx="2" ry="1.2" fill="#e0e0da"/>
<ellipse cx="506.2" cy="399.7" rx="2" ry="1.2" fill="#e0e0da"/>
<ellipse cx="509.2" cy="415.9" rx="2" ry="1.2" fill="#d4d4cf"/>
<ellipse cx="510.1" cy="399.5" rx="2" ry="1.2" fill="#b9dcc6"/>
<ellipse cx="513.7" cy="418.6" rx="2" ry="1.2" fill="#d4d4cf"/>
<ellipse cx="510.0" cy="405.5" rx="2" ry="1.2" fill="#e0e0da"/>
</g>
<polygon points="759.8087297694949,147.69576589831615 766.3478829491581,141.15661271865292 773.7044302762793,140.33921857119503 775.339218571195,143.60879516102665 777.7914010135687,142.79140101356873 784.3305541932319,136.2522478339055 786.7827366356057,136.2522478339055 790.8697073728952,139.52182442373712 793.321889815269,147.69576589831615 795.7740722576426,146.87837175085826 797.4088605525584,155.86970737289522 803.9480137322216,160.77407225764264 808.0349844695112,164.04364884747426 808.0349844695112,167.31322543730587 802.3132254373058,169.76540787967957 797.4088605525584,173.8523786169691 797.4088605525584,182.02632009154814 790.8697073728952,183.66110838646395 794.1392839627268,188.56547327121137 793.321889815269,193.4698381559588 789.2349190779794,206.5481445152853 787.6001307830636,213.08729769494852 781.8783717508583,206.5481445152853 776.1566127186529,196.73941474579044 774.5218244237371,188.56547327121137 773.7044302762793,183.66110838646395 782.6957658983162,178.75674350171653 774.5218244237371,177.12195520680072 766.3478829491581,168.94801373222168 763.8957005067844,159.13928396272684 759.8087297694949,155.86970737289522" fill="#fdfdfd"/>
<polygon points="805.5828020271375,180.39153179663234 815.3915317966323,178.75674350171653 820.2958966813798,186.93068497629557 820.2958966813798,191.835049861043 815.3915317966323,198.37420304070622 807.2175903220533,195.1046264508746 806.4001961745954,186.93068497629557" fill="#fdfdfd"/>
<polygon points="794.1392839627268,128.07830635932646 800.6784371423901,124.80872976949485 803.9480137322216,129.71309465424227 810.487166911885,131.34788294915808 815.3915317966323,124.80872976949485 818.661108386464,129.71309465424227 828.4698381559588,129.71309465424227 834.1915971881641,132.98267124407388 833.3742030407062,141.15661271865292 826.835049861043,150.96534248814777 818.661108386464,155.0523132254373 810.487166911885,151.7827366356057 802.3132254373058,147.69576589831615 805.5828020271375,144.42618930848454 797.4088605525584,141.97400686611084 793.321889815269,134.6174595389897" fill="#fdfdfd"/>
<circle cx="808" cy="174.5" r="3.3" fill="#f2f2f0"/>
<path d="M759.5 164 L765.5 177" stroke="#d9d9d5" stroke-width="2"/>
<ellipse cx="859" cy="131" rx="4" ry="2.5" fill="#fdfdfd"/>
<clipPath id="sv"><polygon points="759.8087297694949,147.69576589831615 766.3478829491581,141.15661271865292 773.7044302762793,140.33921857119503 775.339218571195,143.60879516102665 777.7914010135687,142.79140101356873 784.3305541932319,136.2522478339055 786.7827366356057,136.2522478339055 790.8697073728952,139.52182442373712 793.321889815269,147.69576589831615 795.7740722576426,146.87837175085826 797.4088605525584,155.86970737289522 803.9480137322216,160.77407225764264 808.0349844695112,164.04364884747426 808.0349844695112,167.31322543730587 802.3132254373058,169.76540787967957 797.4088605525584,173.8523786169691 797.4088605525584,182.02632009154814 790.8697073728952,183.66110838646395 794.1392839627268,188.56547327121137 793.321889815269,193.4698381559588 789.2349190779794,206.5481445152853 787.6001307830636,213.08729769494852 781.8783717508583,206.5481445152853 776.1566127186529,196.73941474579044 774.5218244237371,188.56547327121137 773.7044302762793,183.66110838646395 782.6957658983162,178.75674350171653 774.5218244237371,177.12195520680072 766.3478829491581,168.94801373222168 763.8957005067844,159.13928396272684 759.8087297694949,155.86970737289522"/><polygon points="805.5828020271375,180.39153179663234 815.3915317966323,178.75674350171653 820.2958966813798,186.93068497629557 820.2958966813798,191.835049861043 815.3915317966323,198.37420304070622 807.2175903220533,195.1046264508746 806.4001961745954,186.93068497629557"/><polygon points="794.1392839627268,128.07830635932646 800.6784371423901,124.80872976949485 803.9480137322216,129.71309465424227 810.487166911885,131.34788294915808 815.3915317966323,124.80872976949485 818.661108386464,129.71309465424227 828.4698381559588,129.71309465424227 834.1915971881641,132.98267124407388 833.3742030407062,141.15661271865292 826.835049861043,150.96534248814777 818.661108386464,155.0523132254373 810.487166911885,151.7827366356057 802.3132254373058,147.69576589831615 805.5828020271375,144.42618930848454 797.4088605525584,141.97400686611084 793.321889815269,134.6174595389897"/></clipPath><g clip-path="url(#sv)"><g filter="url(#bl)">
<ellipse cx="791.7" cy="167.3" rx="0.9" ry="2.5" fill="#d8d8d3" transform="rotate(18 791.7 167.3)"/>
<ellipse cx="783.7" cy="213.6" rx="0.8" ry="2.9" fill="#d8d8d3" transform="rotate(13 783.7 213.6)"/>
<ellipse cx="797.0" cy="188.5" rx="0.8" ry="2.1" fill="#c6c8c3" transform="rotate(-12 797.0 188.5)"/>
<ellipse cx="791.0" cy="206.6" rx="0.9" ry="2.9" fill="#d8d8d3" transform="rotate(-9 791.0 206.6)"/>
<ellipse cx="766.0" cy="135.7" rx="1.2" ry="1.7" fill="#cfcfca" transform="rotate(-2 766.0 135.7)"/>
<ellipse cx="779.5" cy="138.7" rx="0.6" ry="2.7" fill="#d8d8d3" transform="rotate(-2 779.5 138.7)"/>
<ellipse cx="786.9" cy="149.1" rx="0.9" ry="2.7" fill="#c6c8c3" transform="rotate(-0 786.9 149.1)"/>
<ellipse cx="768.4" cy="186.6" rx="1.0" ry="2.7" fill="#c6c8c3" transform="rotate(1 768.4 186.6)"/>
<ellipse cx="759.2" cy="165.6" rx="0.8" ry="3.4" fill="#cfcfca" transform="rotate(-5 759.2 165.6)"/>
<ellipse cx="805.1" cy="125.9" rx="1.1" ry="2.9" fill="#cfcfca" transform="rotate(-19 805.1 125.9)"/>
<ellipse cx="758.7" cy="129.5" rx="1.1" ry="3.3" fill="#cfcfca" transform="rotate(-6 758.7 129.5)"/>
<ellipse cx="825.3" cy="167.7" rx="1.1" ry="1.8" fill="#c6c8c3" transform="rotate(5 825.3 167.7)"/>
<ellipse cx="794.2" cy="192.7" rx="0.7" ry="2.4" fill="#c6c8c3" transform="rotate(9 794.2 192.7)"/>
<ellipse cx="781.6" cy="131.8" rx="1.1" ry="2.1" fill="#cfcfca" transform="rotate(-6 781.6 131.8)"/>
<ellipse cx="786.0" cy="205.3" rx="1.0" ry="2.5" fill="#d8d8d3" transform="rotate(-11 786.0 205.3)"/>
<ellipse cx="793.3" cy="192.3" rx="0.7" ry="1.6" fill="#cfcfca" transform="rotate(4 793.3 192.3)"/>
<ellipse cx="800.7" cy="213.0" rx="0.9" ry="2.0" fill="#c6c8c3" transform="rotate(8 800.7 213.0)"/>
<ellipse cx="780.5" cy="208.9" rx="0.7" ry="2.2" fill="#cfcfca" transform="rotate(-4 780.5 208.9)"/>
<ellipse cx="759.1" cy="141.8" rx="0.8" ry="2.3" fill="#cfcfca" transform="rotate(7 759.1 141.8)"/>
<ellipse cx="769.7" cy="187.2" rx="1.0" ry="2.9" fill="#cfcfca" transform="rotate(-11 769.7 187.2)"/>
<ellipse cx="774.1" cy="188.8" rx="0.7" ry="2.5" fill="#cfcfca" transform="rotate(-3 774.1 188.8)"/>
<ellipse cx="774.5" cy="209.3" rx="0.9" ry="2.8" fill="#cfcfca" transform="rotate(-8 774.5 209.3)"/>
<ellipse cx="790.1" cy="123.8" rx="1.0" ry="1.6" fill="#c6c8c3" transform="rotate(-7 790.1 123.8)"/>
<ellipse cx="833.2" cy="185.0" rx="0.9" ry="2.2" fill="#cfcfca" transform="rotate(19 833.2 185.0)"/>
<ellipse cx="771.5" cy="189.0" rx="0.9" ry="2.0" fill="#cfcfca" transform="rotate(-2 771.5 189.0)"/>
<ellipse cx="831.3" cy="135.5" rx="1.0" ry="1.6" fill="#c6c8c3" transform="rotate(-2 831.3 135.5)"/>
<ellipse cx="758.3" cy="199.4" rx="0.8" ry="2.5" fill="#cfcfca" transform="rotate(13 758.3 199.4)"/>
<ellipse cx="791.1" cy="169.7" rx="0.8" ry="2.5" fill="#d8d8d3" transform="rotate(-13 791.1 169.7)"/>
<ellipse cx="820.0" cy="127.6" rx="0.8" ry="1.9" fill="#cfcfca" transform="rotate(-3 820.0 127.6)"/>
<ellipse cx="766.1" cy="195.3" rx="1.0" ry="2.5" fill="#c6c8c3" transform="rotate(-7 766.1 195.3)"/>
<ellipse cx="786.7" cy="166.1" rx="0.7" ry="2.3" fill="#c6c8c3" transform="rotate(-8 786.7 166.1)"/>
<ellipse cx="776.8" cy="191.8" rx="1.0" ry="2.0" fill="#cfcfca" transform="rotate(2 776.8 191.8)"/>
<ellipse cx="768.9" cy="199.0" rx="0.7" ry="2.6" fill="#cfcfca" transform="rotate(1 768.9 199.0)"/>
<ellipse cx="834.4" cy="193.9" rx="0.9" ry="2.2" fill="#c6c8c3" transform="rotate(-7 834.4 193.9)"/>
<ellipse cx="766.5" cy="150.1" rx="0.9" ry="2.3" fill="#c6c8c3" transform="rotate(-9 766.5 150.1)"/>
<ellipse cx="780.0" cy="187.9" rx="1.0" ry="3.2" fill="#cfcfca" transform="rotate(10 780.0 187.9)"/>
<ellipse cx="773.2" cy="133.6" rx="0.8" ry="2.1" fill="#d8d8d3" transform="rotate(2 773.2 133.6)"/>
<ellipse cx="813.7" cy="149.2" rx="0.9" ry="1.9" fill="#cfcfca" transform="rotate(2 813.7 149.2)"/>
<ellipse cx="786.3" cy="166.9" rx="1.1" ry="2.2" fill="#c6c8c3" transform="rotate(5 786.3 166.9)"/>
<ellipse cx="778.8" cy="212.5" rx="1.0" ry="3.4" fill="#cfcfca" transform="rotate(-16 778.8 212.5)"/>
<ellipse cx="778.1" cy="128.5" rx="0.8" ry="2.6" fill="#c6c8c3" transform="rotate(-17 778.1 128.5)"/>
<ellipse cx="790.8" cy="210.9" rx="0.7" ry="1.8" fill="#c6c8c3" transform="rotate(4 790.8 210.9)"/>
<ellipse cx="796.2" cy="158.9" rx="0.7" ry="2.6" fill="#d8d8d3" transform="rotate(-6 796.2 158.9)"/>
<ellipse cx="785" cy="181" rx="7" ry="2.5" fill="#d6d7d2"/><ellipse cx="810" cy="189" rx="2.5" ry="4" fill="#d6d7d2"/><ellipse cx="776" cy="160" rx="4" ry="9" fill="#dcdcd8"/><ellipse cx="796" cy="136" rx="2" ry="5" fill="#dcdcd8"/>
</g></g>
<g stroke="#67cde6" fill="none" stroke-linecap="round"><path d="M782.7 138 L784 153" stroke-width="1.6"/><path d="M758 170 L772 172.5" stroke-width="2.6"/><path d="M761 179 L776 181" stroke-width="1.6"/><path d="M795 146 L801 158" stroke-width="1.8"/><path d="M770 140 L772 150" stroke-width="1.3"/></g>
<path d="M931 122 L937 112 L941 110 L941 120 L936 126Z M934 132 L941 128 L941 136 L937 136Z" fill="#f6f6f4"/>
<g font-family="Liberation Sans" font-size="8" fill="#2a6e84"><text x="659" y="190">Greenland Sea</text><text x="859" y="246">Barents Sea</text></g>
<polygon points="930,350 941,342 941,472 930,472" fill="#bbead6"/>
<circle cx="936" cy="333" r="3" fill="#bbead6"/>
<polygon points="743,473 941,473 941,596 672,596 670,575 672,551 700,549 706,547 704,535 705,523 689,521 690,516 705,513 715,510 725,505 736,495 740,482" fill="#bbead6"/>
<g filter="url(#bl)" opacity=".55">
<ellipse cx="757.1" cy="577.4" rx="3.1" ry="2.8" fill="#d0f0e0"/>
<ellipse cx="717.4" cy="527.7" rx="4.7" ry="2.6" fill="#e2f2e8"/>
<ellipse cx="838.3" cy="503.3" rx="5.2" ry="1.3" fill="#e2f2e8"/>
<ellipse cx="920.5" cy="522.2" rx="4.5" ry="1.4" fill="#caf0de"/>
<ellipse cx="718.6" cy="545.0" rx="5.9" ry="2.9" fill="#d0f0e0"/>
<ellipse cx="899.8" cy="577.3" rx="5.8" ry="1.6" fill="#e2f2e8"/>
<ellipse cx="764.8" cy="560.7" rx="4.2" ry="2.0" fill="#d0f0e0"/>
<ellipse cx="793.7" cy="509.0" rx="5.3" ry="1.2" fill="#e2f2e8"/>
<ellipse cx="912.2" cy="574.3" rx="4.6" ry="1.8" fill="#e2f2e8"/>
<ellipse cx="929.2" cy="526.7" rx="5.5" ry="1.1" fill="#d0f0e0"/>
<ellipse cx="887.8" cy="553.5" rx="5.9" ry="1.6" fill="#a8dfc4"/>
<ellipse cx="718.2" cy="480.6" rx="4.4" ry="2.5" fill="#e2f2e8"/>
<ellipse cx="768.4" cy="554.3" rx="3.3" ry="2.4" fill="#caf0de"/>
<ellipse cx="906.3" cy="586.6" rx="3.2" ry="2.1" fill="#d0f0e0"/>
<ellipse cx="881.9" cy="488.2" rx="4.0" ry="1.9" fill="#caf0de"/>
<ellipse cx="752.8" cy="564.2" rx="2.5" ry="1.1" fill="#e2f2e8"/>
<ellipse cx="869.7" cy="548.5" rx="3.7" ry="1.1" fill="#a8dfc4"/>
<ellipse cx="800.7" cy="521.1" rx="4.8" ry="1.9" fill="#a8dfc4"/>
<ellipse cx="928.4" cy="587.9" rx="2.3" ry="2.8" fill="#e2f2e8"/>
<ellipse cx="737.6" cy="497.2" rx="2.2" ry="2.1" fill="#caf0de"/>
<ellipse cx="763.7" cy="588.5" rx="3.2" ry="2.0" fill="#a8dfc4"/>
<ellipse cx="850.1" cy="587.9" rx="2.2" ry="1.2" fill="#d0f0e0"/>
<ellipse cx="749.0" cy="538.0" rx="3.7" ry="1.2" fill="#d0f0e0"/>
<ellipse cx="905.5" cy="545.9" rx="4.1" ry="1.9" fill="#a8dfc4"/>
<ellipse cx="827.4" cy="486.4" rx="2.5" ry="1.3" fill="#a8dfc4"/>
<ellipse cx="936.7" cy="547.5" rx="5.5" ry="2.3" fill="#a8dfc4"/>
<ellipse cx="926.7" cy="516.6" rx="4.2" ry="1.2" fill="#caf0de"/>
<ellipse cx="696.7" cy="483.3" rx="5.4" ry="1.1" fill="#a8dfc4"/>
<ellipse cx="774.5" cy="485.8" rx="5.1" ry="1.9" fill="#caf0de"/>
<ellipse cx="936.5" cy="585.5" rx="2.9" ry="1.7" fill="#caf0de"/>
<ellipse cx="802.7" cy="550.1" rx="4.4" ry="1.2" fill="#e2f2e8"/>
<ellipse cx="868.8" cy="524.2" rx="2.7" ry="1.3" fill="#e2f2e8"/>
<ellipse cx="717.4" cy="473.1" rx="5.0" ry="1.7" fill="#e2f2e8"/>
<ellipse cx="876.6" cy="577.6" rx="2.5" ry="1.9" fill="#d0f0e0"/>
<ellipse cx="721.6" cy="571.4" rx="2.6" ry="2.1" fill="#a8dfc4"/>
<ellipse cx="860.5" cy="534.7" rx="5.7" ry="1.1" fill="#caf0de"/>
<ellipse cx="893.5" cy="484.0" rx="2.9" ry="2.2" fill="#e2f2e8"/>
<ellipse cx="910.6" cy="581.3" rx="3.9" ry="1.1" fill="#e2f2e8"/>
<ellipse cx="818.0" cy="516.2" rx="3.3" ry="2.0" fill="#e2f2e8"/>
<ellipse cx="752.1" cy="517.7" rx="2.5" ry="2.9" fill="#a8dfc4"/>
<ellipse cx="749.0" cy="522.5" rx="2.6" ry="1.5" fill="#a8dfc4"/>
<ellipse cx="754.2" cy="544.6" rx="4.7" ry="1.5" fill="#e2f2e8"/>
<ellipse cx="901.8" cy="497.0" rx="2.9" ry="1.2" fill="#e2f2e8"/>
<ellipse cx="751.7" cy="485.1" rx="2.3" ry="2.8" fill="#a8dfc4"/>
<ellipse cx="806.6" cy="503.7" rx="2.4" ry="1.5" fill="#d0f0e0"/>
<ellipse cx="694.6" cy="586.9" rx="3.8" ry="2.1" fill="#d0f0e0"/>
<ellipse cx="831.4" cy="531.0" rx="4.9" ry="2.1" fill="#caf0de"/>
<ellipse cx="821.4" cy="565.9" rx="3.0" ry="1.6" fill="#a8dfc4"/>
<ellipse cx="876.1" cy="571.3" rx="5.9" ry="2.1" fill="#a8dfc4"/>
<ellipse cx="716.2" cy="547.2" rx="3.6" ry="2.5" fill="#d0f0e0"/>
<ellipse cx="870.9" cy="485.4" rx="5.9" ry="2.0" fill="#e2f2e8"/>
<ellipse cx="780.8" cy="479.2" rx="3.2" ry="1.6" fill="#a8dfc4"/>
<ellipse cx="732.3" cy="592.6" rx="3.6" ry="2.7" fill="#a8dfc4"/>
<ellipse cx="901.8" cy="485.8" rx="5.9" ry="1.3" fill="#caf0de"/>
<ellipse cx="851.3" cy="491.4" rx="5.1" ry="2.0" fill="#e2f2e8"/>
<ellipse cx="703.3" cy="508.3" rx="2.1" ry="1.1" fill="#e2f2e8"/>
<ellipse cx="799.7" cy="545.5" rx="3.6" ry="1.4" fill="#d0f0e0"/>
<ellipse cx="868.4" cy="478.0" rx="4.2" ry="2.8" fill="#a8dfc4"/>
<ellipse cx="868.8" cy="567.1" rx="5.8" ry="2.2" fill="#a8dfc4"/>
<ellipse cx="800.6" cy="510.4" rx="3.4" ry="1.6" fill="#e2f2e8"/>
<ellipse cx="906.3" cy="553.4" rx="4.6" ry="1.4" fill="#e2f2e8"/>
<ellipse cx="859.6" cy="574.0" rx="2.8" ry="1.4" fill="#d0f0e0"/>
<ellipse cx="938.7" cy="526.2" rx="4.5" ry="2.1" fill="#e2f2e8"/>
<ellipse cx="892.3" cy="585.8" rx="3.2" ry="2.2" fill="#caf0de"/>
<ellipse cx="773.7" cy="488.8" rx="4.6" ry="1.6" fill="#e2f2e8"/>
<ellipse cx="926.6" cy="549.1" rx="2.2" ry="1.7" fill="#d0f0e0"/>
<ellipse cx="798.7" cy="532.3" rx="6.0" ry="1.5" fill="#e2f2e8"/>
<ellipse cx="880.6" cy="551.0" rx="5.9" ry="2.3" fill="#caf0de"/>
<ellipse cx="809.2" cy="558.5" rx="3.6" ry="1.5" fill="#caf0de"/>
<ellipse cx="881.8" cy="572.2" rx="3.3" ry="2.7" fill="#e2f2e8"/>
<ellipse cx="777.1" cy="522.6" rx="4.0" ry="2.0" fill="#a8dfc4"/>
<ellipse cx="919.0" cy="576.9" rx="3.7" ry="2.8" fill="#caf0de"/>
<ellipse cx="883.1" cy="553.4" rx="4.3" ry="1.2" fill="#a8dfc4"/>
<ellipse cx="719.3" cy="495.0" rx="5.6" ry="1.9" fill="#d0f0e0"/>
<ellipse cx="843.4" cy="496.1" rx="2.2" ry="2.4" fill="#e2f2e8"/>
<ellipse cx="821.1" cy="501.5" rx="6.0" ry="1.1" fill="#caf0de"/>
<ellipse cx="813.0" cy="507.6" rx="3.8" ry="2.3" fill="#d0f0e0"/>
<ellipse cx="696.3" cy="551.6" rx="3.0" ry="2.9" fill="#e2f2e8"/>
<ellipse cx="716.6" cy="567.9" rx="4.3" ry="1.9" fill="#e2f2e8"/>
<ellipse cx="774.0" cy="578.4" rx="2.9" ry="2.1" fill="#d0f0e0"/>
<ellipse cx="848.3" cy="560.1" rx="4.6" ry="1.1" fill="#a8dfc4"/>
<ellipse cx="925.7" cy="477.6" rx="3.6" ry="1.8" fill="#d0f0e0"/>
<ellipse cx="746.0" cy="592.0" rx="4.8" ry="1.5" fill="#caf0de"/>
<ellipse cx="818.0" cy="507.1" rx="2.6" ry="1.3" fill="#a8dfc4"/>
<ellipse cx="797.9" cy="585.7" rx="3.4" ry="2.2" fill="#d0f0e0"/>
<ellipse cx="911.3" cy="553.1" rx="5.3" ry="2.3" fill="#a8dfc4"/>
<ellipse cx="906.8" cy="539.5" rx="5.3" ry="3.0" fill="#d0f0e0"/>
<ellipse cx="696.5" cy="544.7" rx="5.3" ry="2.8" fill="#e2f2e8"/>
<ellipse cx="812.7" cy="500.1" rx="2.8" ry="2.6" fill="#d0f0e0"/>
<ellipse cx="913.9" cy="515.0" rx="3.0" ry="1.8" fill="#d0f0e0"/>
<ellipse cx="713.7" cy="561.2" rx="2.1" ry="2.7" fill="#a8dfc4"/>
<ellipse cx="761.2" cy="494.3" rx="3.5" ry="2.6" fill="#d0f0e0"/>
<ellipse cx="802.9" cy="546.0" rx="3.2" ry="2.1" fill="#caf0de"/>
<ellipse cx="751.6" cy="496.9" rx="4.3" ry="2.3" fill="#d0f0e0"/>
<ellipse cx="842.4" cy="523.5" rx="3.4" ry="1.8" fill="#a8dfc4"/>
<ellipse cx="702.5" cy="551.8" rx="4.6" ry="1.4" fill="#a8dfc4"/>
<ellipse cx="857.8" cy="576.6" rx="3.7" ry="2.9" fill="#caf0de"/>
<ellipse cx="867.2" cy="532.9" rx="4.1" ry="1.7" fill="#d0f0e0"/>
<ellipse cx="845.5" cy="542.8" rx="2.0" ry="1.4" fill="#e2f2e8"/>
<ellipse cx="819.6" cy="575.0" rx="5.2" ry="1.0" fill="#a8dfc4"/>
<ellipse cx="746.7" cy="525.4" rx="2.2" ry="1.0" fill="#d0f0e0"/>
<ellipse cx="735.3" cy="512.2" rx="4.1" ry="2.5" fill="#caf0de"/>
<ellipse cx="787.3" cy="543.7" rx="4.0" ry="2.9" fill="#e2f2e8"/>
<ellipse cx="747.2" cy="568.1" rx="2.9" ry="2.5" fill="#e2f2e8"/>
<ellipse cx="726.5" cy="578.9" rx="4.1" ry="1.3" fill="#e2f2e8"/>
<ellipse cx="797.4" cy="566.2" rx="3.2" ry="3.0" fill="#d0f0e0"/>
<ellipse cx="760.9" cy="518.7" rx="2.8" ry="2.6" fill="#d0f0e0"/>
<ellipse cx="774.6" cy="550.1" rx="3.7" ry="2.4" fill="#caf0de"/>
<ellipse cx="809.9" cy="581.2" rx="2.2" ry="2.2" fill="#caf0de"/>
<ellipse cx="718.2" cy="494.1" rx="5.3" ry="1.2" fill="#e2f2e8"/>
<ellipse cx="818.8" cy="584.4" rx="5.4" ry="1.1" fill="#caf0de"/>
<ellipse cx="719.4" cy="538.1" rx="4.7" ry="1.9" fill="#a8dfc4"/>
<ellipse cx="756.2" cy="566.6" rx="5.8" ry="1.5" fill="#a8dfc4"/>
<ellipse cx="786.9" cy="592.7" rx="4.5" ry="1.2" fill="#caf0de"/>
<ellipse cx="724.4" cy="566.3" rx="4.0" ry="2.1" fill="#e2f2e8"/>
<ellipse cx="915.5" cy="506.9" rx="3.9" ry="1.3" fill="#d0f0e0"/>
<ellipse cx="741.0" cy="518.1" rx="3.5" ry="1.0" fill="#d0f0e0"/>
<ellipse cx="915.3" cy="509.0" rx="3.6" ry="1.6" fill="#caf0de"/>
<ellipse cx="700.1" cy="507.8" rx="5.8" ry="1.6" fill="#a8dfc4"/>
<ellipse cx="842.1" cy="484.8" rx="5.6" ry="1.9" fill="#d0f0e0"/>
<ellipse cx="748.0" cy="564.3" rx="3.0" ry="2.0" fill="#e2f2e8"/>
<ellipse cx="889.7" cy="514.4" rx="4.1" ry="2.2" fill="#d0f0e0"/>
<ellipse cx="738.8" cy="593.2" rx="4.5" ry="1.3" fill="#a8dfc4"/>
<ellipse cx="925.6" cy="575.1" rx="5.9" ry="2.1" fill="#d0f0e0"/>
<ellipse cx="747.1" cy="494.2" rx="4.9" ry="2.7" fill="#d0f0e0"/>
<ellipse cx="784.6" cy="591.2" rx="2.5" ry="2.7" fill="#e2f2e8"/>
<ellipse cx="731.3" cy="512.6" rx="4.9" ry="1.3" fill="#d0f0e0"/>
<ellipse cx="740.0" cy="490.5" rx="5.7" ry="1.5" fill="#d0f0e0"/>
<ellipse cx="790.0" cy="482.7" rx="2.8" ry="1.1" fill="#a8dfc4"/>
<ellipse cx="762.9" cy="542.0" rx="5.3" ry="1.4" fill="#caf0de"/>
<ellipse cx="766.7" cy="589.6" rx="2.2" ry="1.4" fill="#caf0de"/>
<ellipse cx="712.4" cy="553.8" rx="3.4" ry="2.3" fill="#e2f2e8"/>
<ellipse cx="866.2" cy="587.7" rx="2.7" ry="1.1" fill="#caf0de"/>
<ellipse cx="777.6" cy="549.5" rx="6.0" ry="1.2" fill="#a8dfc4"/>
<ellipse cx="784.4" cy="477.5" rx="4.9" ry="1.8" fill="#d0f0e0"/>
<ellipse cx="758.9" cy="550.1" rx="3.0" ry="2.9" fill="#caf0de"/>
<ellipse cx="782.1" cy="588.0" rx="2.7" ry="1.1" fill="#e2f2e8"/>
<ellipse cx="820.5" cy="556.4" rx="4.5" ry="2.2" fill="#caf0de"/>
<ellipse cx="694.6" cy="497.6" rx="3.1" ry="1.7" fill="#e2f2e8"/>
<ellipse cx="714.6" cy="503.4" rx="2.5" ry="1.6" fill="#caf0de"/>
</g>
<g filter="url(#bl)">
<polygon points="832,570 852,570 870,568 890,570 906,568 906,596 832,596" fill="#d5e9d6" opacity=".8"/>
<ellipse cx="868" cy="587" rx="28" ry="7" fill="#ebe8da" opacity=".9"/>
<ellipse cx="692" cy="582" rx="13" ry="9" fill="#e3e9d6"/>
<ellipse cx="712" cy="572" rx="8" ry="6" fill="#e8ebdd"/>
<polygon points="924,498 941,496 941,528 926,528" fill="#ebe8da"/>
</g>
<g stroke="#4a4a4a" stroke-width=".7" fill="none" opacity=".8" stroke-linejoin="round">
<path d="M776 474 L778 488 L779 501"/>
<path d="M766 505.7 L782 501 L793.7 510 L814 514.4"/>
<path d="M815.4 474 L821 494 L818 504 L814 514.4"/>
<path d="M766 507 L776 514 L793.7 511.5"/>
<path d="M821 494 L849 495.6 L867.7 492.7"/>
<path d="M793.7 511.5 L812 519 L815 523 L827 520 L838 522 L848 532"/>
<path d="M866 473 L866 488 L876 504 L894 510 L888 526"/>
<path d="M743 497 L745 505 L748 512 L752 520 L745 528"/>
<path d="M725 505 L735 510 L748 512"/>
<path d="M752 520 L766 523 L776 526 L793 526 L812 519"/>
<path d="M745 528 L750 536 L758 542"/>
<path d="M706 547 L715 549 L725 552"/>
<path d="M672 551 L678 562 L676 575 L672 586"/>
<path d="M793 526 L800 535 L812 540 L830 542 L838 540"/>
<path d="M800 535 L798 548 L803 560"/>
<path d="M812 540 L815 555 L822 566"/>
<path d="M838 540 L840 550"/>
<path d="M894 473 L902 490 L920 495 L941 492"/>
<path d="M880 496 L905 512 L925 522 L941 530"/>
<path d="M833 567 L845 572 L852 580"/>
<path d="M790 473 L792 490"/>
<path d="M776 526 L780 534 L790 538 L798 548"/>
<path d="M785 540 L792 546 L800 550"/>
<path d="M803 548 L812 552 L820 556"/>
<path d="M798 555 L805 560 L812 565"/>
<path d="M790 546 L795 556"/>
<path d="M815 523 L818 532 L828 534"/>
<path d="M838 522 L842 530 L838 540"/>
<path d="M828 534 L826 545 L835 552"/>
<path d="M745 528 L752 536 L760 537 L768 537"/>
<path d="M736 495 L740 505 L745 505"/>
<path d="M720 527 L735 535 L745 528"/>
<path d="M706 547 L720 547 L735 540 L745 536"/>
<path d="M849 495 L852 510 L848 520"/>
<path d="M880 566 L890 580 L906 590"/>
<path d="M860 575 L875 590"/>
</g>
<g stroke="#666" stroke-width=".5" fill="none" stroke-dasharray="1.5 1.5" opacity=".6">
<path d="M880 480 L900 478 L920 486"/>
<path d="M905 500 L915 480 L935 476"/>
<path d="M870 520 L900 520 L920 515"/>
</g>
<g filter="url(#bl)"><ellipse cx="752" cy="533" rx="9" ry="3" fill="#e4efe6"/><ellipse cx="772" cy="530" rx="7" ry="2.5" fill="#dcece0"/></g>
<polygon points="725,555 741.5,550 750,546 758,542 766,538 770,551 780,565 788,573 786,583 782,586 770,584 768,591 700,591 710,585 712,573 725,559" fill="#67cde6"/>
<polygon points="768,537 776,539 790,552 799,562 798,568 793,566 786,560 775,549" fill="#67cde6"/>
<polygon points="788,573 798,568 802,580 812,590 820,590 826,582 822,568 832,566 828,575 830,590 836,596 780,596 786,586" fill="#67cde6"/>
<polygon points="838,550 846,543 860,544 868,542 888,541 900,546 904,558 898,566 880,566 862,568 845,565 839,560" fill="#67cde6"/>
<polygon points="868,530 888,527 886,538 872,540" fill="#67cde6"/>
<polygon points="932,528 941,526 941,590 934,588 930,560" fill="#67cde6"/>
<polygon points="800,568 812,565 822,566 826,576 820,588 812,590 804,580" fill="#bbead6"/>
<polygon points="768,584 781,583 779,591 770,590" fill="#bbead6"/>
<ellipse cx="752" cy="571" rx="3" ry="7" fill="#bbead6"/><ellipse cx="753" cy="559" rx="2" ry="3.5" fill="#bbead6"/>
<ellipse cx="826" cy="592" rx="5" ry="1.5" fill="#bbead6"/>
<polygon points="740,473 749,473 748,482 741,480" fill="#67cde6"/>
<polygon points="756,473 769,473 765,477 757,477" fill="#67cde6"/>
<polygon points="665,476 680,474 686,480 684,492 675,497 664,496 668,487" fill="#bbead6"/>
<polygon points="688,473 715,473 718,483 721,495 718,502 700,504 686,507 694,498 690,492 695,486" fill="#bbead6"/>
</svg>
<!-- MAP OVERLAY -->
<svg class="abs" style="left:506px;top:84px" width="435" height="512" viewBox="506 84 435 512">
<g font-family="Liberation Sans" font-weight="bold" font-size="9" fill="#333" stroke="#fff" stroke-width="2" paint-order="stroke" stroke-linejoin="round">
<text x="506" y="373">lar</text>
<text x="653" y="490">Ireland</text>
<text x="690" y="481">Kingdom</text>
<text x="829" y="483">Belarus</text>
<text x="790" y="492">Poland</text>
<text x="736" y="502">Germany</text>
<text x="838" y="516">Ukraine</text>
<text x="760" y="526">Austria</text>
<text x="706" y="534">France</text>
<text x="805" y="541">Romania</text>
<text x="757" y="558">Italy</text>
<text x="686" y="572">Spain</text>
<text x="653" y="590">Portugal</text>
<text x="798" y="582">Greece</text>
<text x="857" y="585">Türkiye</text>
</g>
<text x="790" y="501" font-family="Liberation Sans" font-size="16" fill="#8a6fa6" stroke="#fff" stroke-width="1.5" paint-order="stroke">欧洲</text>
<!-- route -->
<line x1="730" y1="518" x2="945" y2="559" stroke="#fff" stroke-width="6.5" opacity=".7"/>
<line x1="730" y1="518" x2="945" y2="559" stroke="#4d92f7" stroke-width="4.6"/>
<g stroke="#fff" stroke-width="1" fill="none">
<path d="M754 520.5 l-3 1.8 l3 2"/><path d="M785 526.5 l-3 1.8 l3 2"/><path d="M826 534 l-3 1.8 l3 2"/><path d="M866 542 l-3 1.8 l3 2"/><path d="M913 551 l-3 1.8 l3 2"/>
</g>
<!-- car marker -->
<rect x="713" y="514.5" width="2.5" height="4.5" fill="#444"/><rect x="731.5" y="514.5" width="2.5" height="4.5" fill="#444"/>
<rect x="715" y="508" width="3" height="3" fill="#d64"/><rect x="729" y="508" width="3" height="3" fill="#d64"/>
<rect x="715" y="510" width="17" height="23.5" fill="#1e88f0"/>
<path d="M718 520.5 q0 -3.5 4 -3.5 q4.2 0 4.6 3.6 q0.4 4 -1.6 7.6 q-0.4 -3.2 -3 -3.8 q-4 -0.4 -4 -3.9z" fill="#fff"/>
<!-- B pin -->
<path d="M723.6 514 L712.5 503 A14.4 14.4 0 1 1 734.7 503 Z" fill="#3b55e6"/>
<circle cx="723.6" cy="493.7" r="9.4" fill="#7189ee"/>
<text x="723.6" y="499" text-anchor="middle" font-family="Liberation Sans" font-weight="bold" font-size="14" fill="#fff">B</text>
<!-- scale -->
<text x="549" y="571" font-family="Liberation Sans" font-size="8" fill="#4b7d8c">1000 公里</text>
<path d="M508.5 574 V579 M508.5 577 H620.5 M620.5 574 V579" stroke="#fff" stroke-width="3.5" fill="none"/>
<path d="M508.5 574 V579 M508.5 577 H620.5 M620.5 574 V579" stroke="#222" stroke-width="1.5" fill="none"/>
<rect x="509" y="580" width="12" height="12" rx="2" fill="#d5eec0"/>
<path d="M510 587 L520 581 L515 591 L514 587Z" fill="#2d7cf0"/>
<text x="523" y="591" font-family="Liberation Sans" font-weight="bold" font-size="11" fill="#222" stroke="#fff" stroke-width="1.5" paint-order="stroke">高德地图</text>
</svg>
<!-- map buttons -->
<div class="abs mbtn" style="top:93px"><svg width="26" height="26"><circle cx="13" cy="13" r="5" fill="none" stroke="#333" stroke-width="1"/><path d="M11.5 10.5 L15.5 13 L11.5 15.5Z" fill="none" stroke="#333" stroke-width="1"/></svg></div>
<div class="abs mbtn" style="top:129px"><svg width="26" height="26"><path d="M6.8 13 Q13 6.4 19.2 13 Q13 19.6 6.8 13Z" fill="none" stroke="#444" stroke-width="1"/><circle cx="13" cy="13" r="2.4" fill="none" stroke="#444" stroke-width="1"/></svg></div>
<div class="abs mbtn" style="top:165px;background:#2f4ee9"><svg width="26" height="26"><g fill="none" stroke="#fff" stroke-width="1.1"><circle cx="13" cy="13" r="5.6"/><ellipse cx="13" cy="13" rx="2.4" ry="5.6"/><path d="M7.6 11 H18.4 M7.6 15 H18.4 M13 7.4 V18.6"/></g></svg></div>
<div class="abs mbtn" style="top:201px"><svg width="26" height="26"><g fill="none" stroke="#444" stroke-width="1.1"><path d="M9.5 9.5 L11.8 11.8 M14.2 11.8 L16.5 9.5 M9.5 16.5 L11.8 14.2 M14.2 14.2 L16.5 16.5"/></g><g fill="#444"><path d="M8.6 8.6 h2.8 l-2.8 2.8z M17.4 8.6 h-2.8 l2.8 2.8z M8.6 17.4 h2.8 l-2.8 -2.8z M17.4 17.4 h-2.8 l2.8 -2.8z"/></g></svg></div>
<!-- zoom control -->
<div class="abs" style="left:906px;top:514px;width:26px;height:73px;background:rgba(255,255,255,.9);border-radius:2px;box-shadow:0 0 3px rgba(0,0,0,.2)">
<svg width="26" height="73"><path d="M13 12 V26 M6 19 H20" stroke="#555" stroke-width="1.6"/><path d="M5 38.5 H21" stroke="#ddd"/><path d="M6 56 H20" stroke="#d0d0d0" stroke-width="1.3"/></svg>
</div>
<!-- date input -->
<div class="abs dinput"><span class="abs" style="left:39px;top:0">2024-10-13 09:31:38</span><span class="abs" style="left:172px;top:0">~</span><span class="abs" style="left:207px;top:0">2024-10-14 09:31:38</span></div>
<!-- popup -->
<div class="abs popup">
<div class="abs ptitle">设备"00000010国际版法国"在该位置 的数据</div>
<svg class="abs" style="left:398px;top:5px" width="10" height="9"><path d="M1.2 1 L8.8 8 M8.8 1 L1.2 8" stroke="#bdbdbd" stroke-width="1.7"/></svg>
<div class="abs dark">
 <svg class="abs" style="left:13px;top:4px" width="10" height="17"><rect x="3.2" y="0" width="3.6" height="2.2" fill="#fff"/><rect x="0.8" y="2" width="8.4" height="14.5" rx="1" fill="#fff"/><rect x="2.2" y="3.8" width="5.6" height="2" fill="#5f5f5f"/></svg>
 <div class="abs drow" style="left:28px;top:4px">93%(电量正常)</div>
 <svg class="abs" style="left:134px;top:5px" width="13" height="13"><rect x="0" y="8" width="2.5" height="5" fill="#fff"/><rect x="5" y="4" width="2.5" height="9" fill="#fff"/><rect x="10" y="0" width="2.5" height="13" fill="#fff"/></svg>
 <div class="abs drow" style="left:150px;top:4px">-71db(信号一般)</div>
 <svg class="abs" style="left:12px;top:24.5px" width="12" height="20"><path d="M5.5 13.6 C3 10.5 1.2 8.3 1.2 5.6 A4.3 4.3 0 0 1 9.8 5.6 C9.8 8.3 8 10.5 5.5 13.6Z" fill="none" stroke="#fff" stroke-width="1.5" stroke-linejoin="round"/><circle cx="5.5" cy="5.4" r="1.5" fill="#fff"/><path d="M0 16 H11" stroke="#fff" stroke-width="1.6"/></svg>
 <div class="abs drow" style="left:28px;top:25px">2H82+26 法国莫爾加</div>
</div>
<!-- rows -->
<svg class="abs" style="left:27px;top:75px" width="10" height="17"><rect x="2.8" y="0.5" width="4.4" height="11" rx="2.2" fill="#2f4ee9"/><circle cx="5" cy="12.5" r="4" fill="#2f4ee9"/><rect x="4.4" y="3" width="1.2" height="8" fill="#fff"/></svg>
<div class="abs prow" style="left:42px;top:76px">23.36°C(温度正常)</div>
<svg class="abs" style="left:148px;top:76px" width="14" height="16"><path d="M6.7 1.2 L11.6 7.6 A5.6 5.6 0 1 1 1.8 7.6Z" fill="none" stroke="#2f4ee9" stroke-width="1.5" stroke-linejoin="round"/><path d="M1.2 9 H12.2 A5.5 5.5 0 0 1 1.2 9Z" fill="#2f4ee9"/></svg>
<div class="abs prow" style="left:164px;top:76px">42%(湿度正常)</div>
<svg class="abs" style="left:273px;top:75px" width="9" height="17"><rect x="3" y="0" width="3" height="2" fill="#2f4ee9"/><rect x="0.3" y="1.6" width="8.4" height="15" rx="1.2" fill="#2f4ee9"/><rect x="2" y="4" width="5" height="2.2" fill="#fff"/></svg>
<div class="abs prow" style="left:287px;top:76px">93%(电量正常)</div>

<svg class="abs" style="left:22.5px;top:96.5px" width="18" height="18"><circle cx="9" cy="9" r="4.3" fill="none" stroke="#2f4ee9" stroke-width="1.6"/><path d="M9 4.7 A4.3 4.3 0 0 1 9 13.3Z" fill="#2f4ee9"/><g fill="#2f4ee9"><circle cx="9" cy="1.2" r="1"/><circle cx="9" cy="16.8" r="1"/><circle cx="1.2" cy="9" r="1"/><circle cx="16.8" cy="9" r="1"/><circle cx="3.5" cy="3.5" r="1"/><circle cx="14.5" cy="14.5" r="1"/><circle cx="3.5" cy="14.5" r="1"/><circle cx="14.5" cy="3.5" r="1"/></g></svg>
<div class="abs prow" style="left:41px;top:98px">7Lux(无曝光)</div>
<svg class="abs" style="left:148px;top:99px" width="14" height="13"><rect x="0.5" y="7.5" width="3" height="5.5" fill="#2f4ee9"/><rect x="5.2" y="3.8" width="3" height="9.2" fill="#2f4ee9"/><rect x="9.9" y="0" width="3" height="13" fill="#2f4ee9"/></svg>
<div class="abs prow" style="left:164px;top:98px">--db</div>
<svg class="abs" style="left:269.5px;top:97px" width="17" height="17"><g fill="none" stroke="#2f4ee9" stroke-width="1.5" stroke-linecap="round"><path d="M8.2 10 V2 M8.2 10 L1.8 14 M8.2 10 L14.6 14"/></g><g fill="#2f4ee9"><path d="M8.2 0.5 L10.6 3.6 H5.8Z"/><path d="M0.3 15.2 L1 11.6 L3.6 15.4Z"/><path d="M16.1 15.2 L15.4 11.6 L12.8 15.4Z"/></g><g fill="none" stroke="#2f4ee9" stroke-width="1.1"><path d="M3.8 4 l1.2 1.2 -1.2 1.2 1.2 1.2 -1.2 1.2 1.2 1.2"/><path d="M12.6 4 l1.2 1.2 -1.2 1.2 1.2 1.2 -1.2 1.2 1.2 1.2"/></g></svg>
<div class="abs prow" style="left:286px;top:98px">2.8g(无震动)</div>

<svg class="abs" style="left:23px;top:119px" width="17" height="17"><g fill="none" stroke="#2f4ee9" stroke-width="1.5" stroke-linecap="round"><path d="M8.2 10 V2 M8.2 10 L1.8 14 M8.2 10 L14.6 14"/></g><g fill="#2f4ee9"><path d="M8.2 0.5 L10.6 3.6 H5.8Z"/><path d="M0.3 15.2 L1 11.6 L3.6 15.4Z"/><path d="M16.1 15.2 L15.4 11.6 L12.8 15.4Z"/></g><g fill="none" stroke="#2f4ee9" stroke-width="1.1"><path d="M12.5 3.5 l1.3 1.3 -1.3 1.3 1.3 1.3 -1.3 1.3 1.3 1.3"/></g></svg>
<div class="abs prow" style="left:41px;top:121px">-1.0g(无震动)</div>
<svg class="abs" style="left:146.5px;top:119.5px" width="17" height="17"><g fill="none" stroke="#2f4ee9" stroke-width="1.5" stroke-linecap="round"><path d="M8.2 10 V2 M8.2 10 L1.8 14 M8.2 10 L14.6 14"/></g><g fill="#2f4ee9"><path d="M8.2 0.5 L10.6 3.6 H5.8Z"/><path d="M0.3 15.2 L1 11.6 L3.6 15.4Z"/><path d="M16.1 15.2 L15.4 11.6 L12.8 15.4Z"/></g><g fill="none" stroke="#2f4ee9" stroke-width="1.1"><path d="M2.5 4 l2.2 0.3 -1.6 1.4 2.4 0.3 -1.6 1.4 2.4 0.3"/></g></svg>
<div class="abs prow" style="left:164px;top:121px">2.1g(无震动)</div>
<svg class="abs" style="left:269.5px;top:119.5px" width="17" height="17"><g fill="none" stroke="#2f4ee9" stroke-width="1.5" stroke-linecap="round"><path d="M8.2 10 V2 M8.2 10 L1.8 14 M8.2 10 L14.6 14"/></g><g fill="#2f4ee9"><path d="M8.2 0.5 L10.6 3.6 H5.8Z"/><path d="M0.3 15.2 L1 11.6 L3.6 15.4Z"/><path d="M16.1 15.2 L15.4 11.6 L12.8 15.4Z"/></g><g fill="none" stroke="#2f4ee9" stroke-width="1.1"><path d="M5.2 4 l1.2 1.2 -1.2 1.2 1.2 1.2"/><path d="M10.5 4.5 h2 l-2 2.5 h2"/></g></svg>
<div class="abs prow" style="left:286px;top:121px">1.7g(无震动)</div>

<svg class="abs" style="left:23px;top:145px" width="18" height="13"><g fill="none" stroke="#2f4ee9" stroke-width="2" stroke-linecap="round"><path d="M1.2 5.2 Q3.5 2.8 6 2.2"/><path d="M11.5 2.2 Q14.5 2.8 16.8 5.2"/><path d="M4 7.8 Q5.2 6.6 6.5 6"/><path d="M11 6 Q12.6 6.6 14 7.8"/></g><path d="M10.5 0.8 L7.2 11.5" stroke="#2f4ee9" stroke-width="2.4" stroke-linecap="round"/></svg>
<div class="abs prow" style="left:41px;top:143px">--km/h</div>
<svg class="abs" style="left:147.5px;top:142.5px" width="15" height="17"><path d="M5 0.8 L13.6 2.8 L11 13.6 L2.2 11.6Z" fill="#2f4ee9" stroke="#2f4ee9" stroke-width="1" stroke-linejoin="round"/><path d="M6.6 3.6 L10.6 4.6 L10.2 6.4 L6.2 5.4Z" fill="#fff"/><path d="M0 16 H15" stroke="#2f4ee9" stroke-width="1.5"/></svg>
<div class="abs prow" style="left:164px;top:143px">135.3°(无倾斜)</div>
<div class="abs prow" style="left:297px;top:163px;color:#666">2024-10-14 01:38:25</div>
</div>
<!-- events -->
<div class="abs events"><div class="abs ehead">事件</div><div class="abs" style="left:427px;top:32px;width:6px;height:8px;background:#c8c8c8"></div></div>
<!-- slider -->

</body></html>
